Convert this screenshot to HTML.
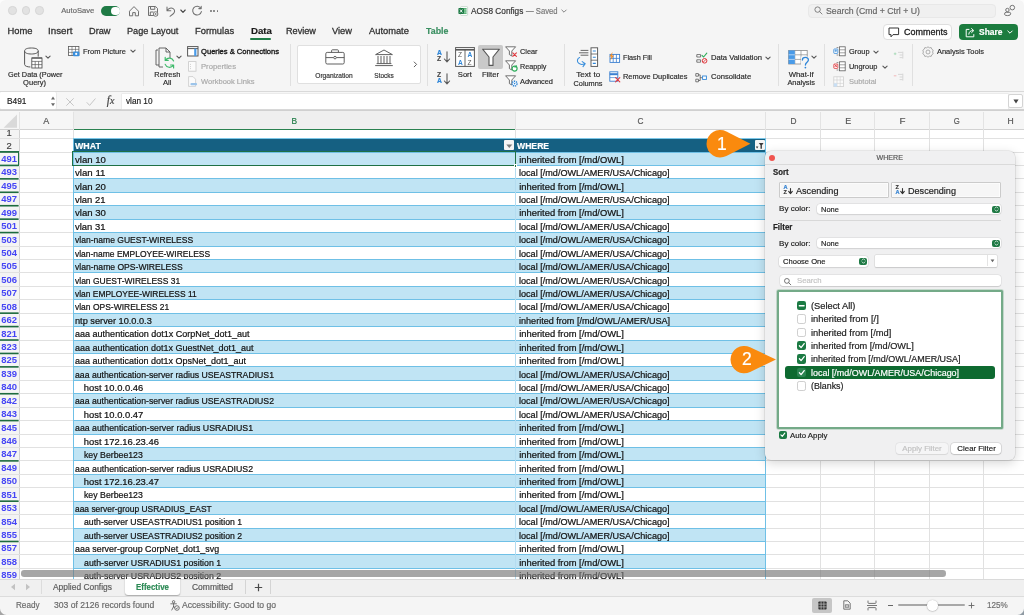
<!DOCTYPE html>
<html><head><meta charset="utf-8"><title>AOS8 Configs</title>
<style>
html,body{margin:0;padding:0;}
body{width:1024px;height:615px;overflow:hidden;position:relative;background:#f5f5f5;font-family:"Liberation Sans",sans-serif;}
.r{position:absolute;box-sizing:border-box;}
.t{position:absolute;white-space:nowrap;display:block;-webkit-text-stroke:0.18px;}
svg{overflow:visible;}
#w{position:absolute;left:0;top:0;width:1024px;height:615px;overflow:hidden;will-change:transform;-webkit-font-smoothing:antialiased;}
</style></head><body><div id="w">
<div class="r" style="left:0.00px;top:0.00px;width:1024.00px;height:91.00px;background:#f5f5f5;"></div>
<div class="r" style="left:8.30px;top:6.30px;width:8.40px;height:8.40px;background:#e2e2e2;border-radius:50%;border:0.6px solid #d6d6d6;"></div>
<div class="r" style="left:21.80px;top:6.30px;width:8.40px;height:8.40px;background:#e2e2e2;border-radius:50%;border:0.6px solid #d6d6d6;"></div>
<div class="r" style="left:35.30px;top:6.30px;width:8.40px;height:8.40px;background:#e2e2e2;border-radius:50%;border:0.6px solid #d6d6d6;"></div>
<span class="t" style="left:61.30px;top:6.34px;font-size:7.6px;line-height:9.12px;color:#6a6a6a;">AutoSave</span>
<div class="r" style="left:101.20px;top:5.90px;width:19.00px;height:9.80px;background:#1f7a45;border-radius:5px;"></div>
<div class="r" style="left:111.20px;top:6.60px;width:8.40px;height:8.40px;background:#fff;border-radius:50%;"></div>
<svg class="r" style="left:128.00px;top:4.70px;" width="12" height="12" viewBox="0 0 12 12"><path d="M1.5 6.2 L6 1.6 L10.5 6.2 V10.8 H7.3 V7.6 H4.7 V10.8 H1.5 Z" fill="none" stroke="#707070" stroke-width="1" stroke-linejoin="round"/></svg>
<svg class="r" style="left:146.50px;top:4.70px;" width="12" height="12" viewBox="0 0 12 12"><path d="M1.5 1.5 H8.6 L10.5 3.4 V10.5 H1.5 Z M3.5 1.5 V4.3 H7.8 V1.5 M3.3 10.5 V7 H6.5" fill="none" stroke="#707070" stroke-width="1" stroke-linejoin="round"/><circle cx="8.6" cy="9" r="2.3" fill="#f5f5f5" stroke="#707070" stroke-width="0.9"/><path d="M7.6 9 h2 M8.6 8 v2" stroke="#707070" stroke-width="0.7"/></svg>
<svg class="r" style="left:165.00px;top:4.70px;" width="12" height="12" viewBox="0 0 12 12"><path d="M2 2 V5.8 H5.8 M2.2 5.6 C3.5 3.2 6.2 2.3 8.2 3.6 C10.4 5 9.8 7.6 8 9 L5 11.3" fill="none" stroke="#707070" stroke-width="1.05" stroke-linecap="round" stroke-linejoin="round"/></svg>
<svg class="r" style="left:179.50px;top:8.70px;" width="6" height="5" viewBox="0 0 6 5"><path d="M0.8 1 L3 3.3 L5.2 1" fill="none" stroke="#444" stroke-width="1.1" stroke-linecap="round" stroke-linejoin="round"/></svg>
<svg class="r" style="left:190.50px;top:4.70px;" width="12" height="12" viewBox="0 0 12 12"><path d="M9.8 3.2 A4.4 4.4 0 1 0 10.4 6.6 M10.2 1.2 V3.6 H7.8" fill="none" stroke="#707070" stroke-width="1.05" stroke-linecap="round" stroke-linejoin="round"/></svg>
<div class="r" style="left:209.90px;top:10.00px;width:1.80px;height:1.80px;background:#707070;border-radius:50%;"></div>
<div class="r" style="left:213.30px;top:10.00px;width:1.80px;height:1.80px;background:#707070;border-radius:50%;"></div>
<div class="r" style="left:216.70px;top:10.00px;width:1.80px;height:1.80px;background:#707070;border-radius:50%;"></div>
<svg class="r" style="left:457.80px;top:6.00px;" width="10" height="10" viewBox="0 0 10 10"><rect x="2.6" y="0.6" width="7" height="8.8" rx="0.8" fill="#fff" stroke="#9fbfa8" stroke-width="0.5"/><rect x="5.6" y="2.2" width="3" height="1.4" fill="#35a35a"/><rect x="5.6" y="4.3" width="3" height="1.4" fill="#35a35a"/><rect x="5.6" y="6.4" width="3" height="1.4" fill="#35a35a"/><rect x="0.4" y="2" width="5.6" height="6" rx="0.8" fill="#1d7a45"/><path d="M2 3.5 L4.4 6.5 M4.4 3.5 L2 6.5" stroke="#fff" stroke-width="0.9"/></svg>
<span class="t" style="left:471.00px;top:6.06px;font-size:8.4px;line-height:10.08px;color:#333;transform:scaleX(0.9864);transform-origin:left center;">AOS8 Configs</span>
<span class="t" style="left:526.40px;top:6.06px;font-size:8.4px;line-height:10.08px;color:#777;transform:scaleX(0.9146);transform-origin:left center;">— Saved</span>
<svg class="r" style="left:561.00px;top:8.90px;" width="6" height="5" viewBox="0 0 6 5"><path d="M0.8 1 L3 3.2 L5.2 1" fill="none" stroke="#777" stroke-width="0.9" stroke-linecap="round" stroke-linejoin="round"/></svg>
<div class="r" style="left:808.00px;top:4.40px;width:187.50px;height:13.80px;background:#f0f0f0;border-radius:4px;border:0.6px solid #e8e8e8;"></div>
<svg class="r" style="left:813.50px;top:6.30px;" width="9" height="9" viewBox="0 0 9 9"><circle cx="3.6" cy="3.6" r="2.7" fill="none" stroke="#777" stroke-width="0.9"/><path d="M5.6 5.6 L8 8" stroke="#777" stroke-width="0.9" stroke-linecap="round"/></svg>
<span class="t" style="left:826.00px;top:5.64px;font-size:8.6px;line-height:10.32px;color:#666;transform:scaleX(1.0139);transform-origin:left center;">Search (Cmd + Ctrl + U)</span>
<svg class="r" style="left:1003.00px;top:4.00px;" width="14" height="13" viewBox="0 0 14 13"><circle cx="9.3" cy="3.6" r="2.3" fill="none" stroke="#666" stroke-width="0.9"/><circle cx="4.4" cy="6" r="1.7" fill="none" stroke="#666" stroke-width="0.9"/><path d="M1.5 10.2 Q1.5 8.3 3.2 8.3 H6.3 Q7.7 8.3 7.7 9.8 Q7.7 11.6 4.6 11.6 Q1.5 11.6 1.5 10.2 Z" fill="none" stroke="#666" stroke-width="0.9"/></svg>
<span class="t" style="left:7.50px;top:25.46px;font-size:9.4px;line-height:11.28px;color:#303030;-webkit-text-stroke:0.28px;">Home</span>
<span class="t" style="left:48.00px;top:25.46px;font-size:9.4px;line-height:11.28px;color:#303030;transform:scaleX(1.0422);transform-origin:left center;-webkit-text-stroke:0.28px;">Insert</span>
<span class="t" style="left:89.00px;top:25.46px;font-size:9.4px;line-height:11.28px;color:#303030;transform:scaleX(0.9802);transform-origin:left center;-webkit-text-stroke:0.28px;">Draw</span>
<span class="t" style="left:127.00px;top:25.46px;font-size:9.4px;line-height:11.28px;color:#303030;transform:scaleX(0.9757);transform-origin:left center;-webkit-text-stroke:0.28px;">Page Layout</span>
<span class="t" style="left:195.00px;top:25.46px;font-size:9.4px;line-height:11.28px;color:#303030;-webkit-text-stroke:0.28px;">Formulas</span>
<span class="t" style="left:286.00px;top:25.46px;font-size:9.4px;line-height:11.28px;color:#303030;transform:scaleX(0.9734);transform-origin:left center;-webkit-text-stroke:0.28px;">Review</span>
<span class="t" style="left:332.00px;top:25.46px;font-size:9.4px;line-height:11.28px;color:#303030;transform:scaleX(0.9899);transform-origin:left center;-webkit-text-stroke:0.28px;">View</span>
<span class="t" style="left:368.50px;top:25.46px;font-size:9.4px;line-height:11.28px;color:#303030;transform:scaleX(0.9942);transform-origin:left center;-webkit-text-stroke:0.28px;">Automate</span>
<span class="t" style="left:250.50px;top:25.36px;font-size:9.4px;line-height:11.28px;color:#1a1a1a;font-weight:bold;transform:scaleX(1.0308);transform-origin:left center;">Data</span>
<div class="r" style="left:250.40px;top:38.40px;width:21.00px;height:2.00px;background:#217d48;border-radius:1px;"></div>
<span class="t" style="left:425.50px;top:25.36px;font-size:9.4px;line-height:11.28px;color:#3a8f61;font-weight:bold;transform:scaleX(0.9434);transform-origin:left center;">Table</span>
<div class="r" style="left:883.00px;top:24.40px;width:68.50px;height:15.80px;background:#fff;border-radius:4px;border:0.6px solid #dedede;"></div>
<svg class="r" style="left:888.00px;top:27.00px;" width="12" height="11" viewBox="0 0 12 11"><path d="M1 1 H10.6 V7.6 H5 L3 9.8 V7.6 H1 Z" fill="none" stroke="#333" stroke-width="1" stroke-linejoin="round"/></svg>
<span class="t" style="left:903.50px;top:27.04px;font-size:9.1px;line-height:10.92px;color:#222;transform:scaleX(0.9888);transform-origin:left center;-webkit-text-stroke:0.3px;">Comments</span>
<div class="r" style="left:959.00px;top:24.40px;width:58.50px;height:15.80px;background:#1c7c3f;border-radius:4px;"></div>
<svg class="r" style="left:965.00px;top:26.80px;" width="11" height="11" viewBox="0 0 11 11"><path d="M4.4 2.4 H1.2 V9.8 H8.8 V7.2" fill="none" stroke="#fff" stroke-width="1" stroke-linejoin="round"/><path d="M3.8 7.2 C4 4.6 5.6 3.6 7.6 3.6 M6.6 1.6 L8.8 3.6 L6.6 5.6" fill="none" stroke="#fff" stroke-width="1" stroke-linejoin="round" stroke-linecap="round"/></svg>
<span class="t" style="left:979.00px;top:26.94px;font-size:9.1px;line-height:10.92px;color:#fff;font-weight:bold;transform:scaleX(0.9292);transform-origin:left center;">Share</span>
<svg class="r" style="left:1007.00px;top:30.40px;" width="6" height="5" viewBox="0 0 6 5"><path d="M0.8 1 L3 3.2 L5.2 1" fill="none" stroke="#fff" stroke-width="1" stroke-linecap="round" stroke-linejoin="round"/></svg>
<svg class="r" style="left:23.40px;top:46.60px;" width="20" height="26" viewBox="0 0 20 26"><path d="M1.6 4 V17.5 C1.6 19 4.4 20 7.4 20 M1.6 4 C1.6 1.8 4.6 1 8.4 1 C12.2 1 15.2 1.8 15.2 4 V9.6 M1.6 4 C1.6 6 4.6 7 8.4 7 C12.2 7 15.2 6 15.2 4" fill="none" stroke="#575757" stroke-width="1"/><rect x="8.8" y="11" width="10.2" height="10" fill="#fff" stroke="#575757" stroke-width="0.9"/><path d="M8.8 14.4 H19 M8.8 17.6 H19 M12.2 14.4 V21 M15.6 14.4 V21" stroke="#575757" stroke-width="0.7"/><path d="M8.8 11 H19" stroke="#575757" stroke-width="1.2"/></svg>
<svg class="r" style="left:44.60px;top:55.20px;" width="6" height="5" viewBox="0 0 6 5"><path d="M0.9 1.1 L3 3.2 L5.1 1.1" fill="none" stroke="#575757" stroke-width="1.1" stroke-linecap="round" stroke-linejoin="round"/></svg>
<span class="t" style="left:6.70px;top:69.74px;font-size:7.6px;line-height:9.12px;color:#2b2b2b;transform:scaleX(0.9630);transform-origin:center center;">Get Data (Power</span>
<span class="t" style="left:23.39px;top:78.24px;font-size:7.6px;line-height:9.12px;color:#2b2b2b;transform:scaleX(0.9903);transform-origin:center center;">Query)</span>
<svg class="r" style="left:68.00px;top:46.00px;" width="12" height="11" viewBox="0 0 12 11"><rect x="0.5" y="0.5" width="10.4" height="9" fill="#fff" stroke="#575757" stroke-width="0.8"/><path d="M0.5 3.4 H10.9 M0.5 6.4 H10.9 M4 0.5 V9.5 M7.5 0.5 V9.5" stroke="#575757" stroke-width="0.6"/><rect x="5" y="5.6" width="6.4" height="4.6" rx="0.8" fill="#3b8fdc"/><circle cx="8.2" cy="7.9" r="1.1" fill="#fff"/></svg>
<span class="t" style="left:83.00px;top:46.74px;font-size:7.6px;line-height:9.12px;color:#2b2b2b;transform:scaleX(0.9887);transform-origin:left center;">From Picture</span>
<svg class="r" style="left:130.00px;top:49.40px;" width="6" height="5" viewBox="0 0 6 5"><path d="M0.9 1.1 L3 3.2 L5.1 1.1" fill="none" stroke="#575757" stroke-width="1.1" stroke-linecap="round" stroke-linejoin="round"/></svg>
<div class="r" style="left:143.20px;top:44.00px;width:1.00px;height:41.50px;background:#e0e0e0;"></div>
<svg class="r" style="left:155.40px;top:47.00px;" width="22" height="25" viewBox="0 0 22 25"><path d="M3 3 H1 V18 H4" fill="none" stroke="#575757" stroke-width="0.9"/><path d="M4 1 H11 L15 5 V11 M4 1 V20 H8 M11 1 V5 H15" fill="none" stroke="#575757" stroke-width="0.9"/><path d="M18.6 14 A4.6 4.6 0 0 0 10.6 13 M10.2 10.4 V13.4 H13.2" fill="none" stroke="#3dba6a" stroke-width="1.2" stroke-linecap="round" stroke-linejoin="round"/><path d="M10.2 17.4 A4.6 4.6 0 0 0 18.2 18.4 M18.6 21 V18 H15.6" fill="none" stroke="#3dba6a" stroke-width="1.2" stroke-linecap="round" stroke-linejoin="round"/></svg>
<svg class="r" style="left:176.20px;top:54.60px;" width="6" height="5" viewBox="0 0 6 5"><path d="M0.9 1.1 L3 3.2 L5.1 1.1" fill="none" stroke="#575757" stroke-width="1.1" stroke-linecap="round" stroke-linejoin="round"/></svg>
<span class="t" style="left:153.70px;top:69.74px;font-size:7.6px;line-height:9.12px;color:#2b2b2b;transform:scaleX(0.9771);transform-origin:center center;">Refresh</span>
<span class="t" style="left:162.78px;top:78.14px;font-size:7.6px;line-height:9.12px;color:#2b2b2b;transform:scaleX(1.0063);transform-origin:center center;">All</span>
<svg class="r" style="left:186.50px;top:45.50px;" width="12" height="11" viewBox="0 0 12 11"><rect x="0.6" y="0.6" width="10.4" height="9.4" fill="#fff" stroke="#575757" stroke-width="1"/><path d="M0.6 2.6 H11" stroke="#575757" stroke-width="1"/><rect x="7.2" y="2.6" width="2.2" height="7.4" fill="#4a9be8"/></svg>
<span class="t" style="left:201.00px;top:46.74px;font-size:7.6px;line-height:9.12px;color:#1a1a1a;-webkit-text-stroke:0.35px;">Queries &amp; Connections</span>
<svg class="r" style="left:188.00px;top:60.80px;" width="9" height="11" viewBox="0 0 9 11"><rect x="0.6" y="0.6" width="7.4" height="9.6" fill="#fbfbfb" stroke="#c9c9c9" stroke-width="0.8"/><path d="M2.2 3.4 H3 M2.2 5.6 H3 M2.2 7.6 H3" stroke="#bbb" stroke-width="0.8"/></svg>
<span class="t" style="left:201.00px;top:61.74px;font-size:7.6px;line-height:9.12px;color:#a9a9a9;transform:scaleX(1.0105);transform-origin:left center;">Properties</span>
<svg class="r" style="left:188.00px;top:75.50px;" width="10" height="12" viewBox="0 0 10 12"><path d="M0.6 0.6 H5 L7.6 3.2 V10.4 H0.6 Z" fill="#fbfbfb" stroke="#c9c9c9" stroke-width="0.8"/><path d="M3.5 8.2 h4.5" stroke="#9cc4ea" stroke-width="2.2" stroke-linecap="round"/></svg>
<span class="t" style="left:201.00px;top:76.64px;font-size:7.6px;line-height:9.12px;color:#a9a9a9;transform:scaleX(0.9921);transform-origin:left center;">Workbook Links</span>
<div class="r" style="left:289.50px;top:44.00px;width:1.00px;height:41.50px;background:#e0e0e0;"></div>
<div class="r" style="left:297.00px;top:44.80px;width:123.50px;height:39.00px;background:#fff;border-radius:2px;border:0.6px solid #e0e0e0;"></div>
<svg class="r" style="left:324.50px;top:49.00px;" width="20" height="16" viewBox="0 0 20 16"><rect x="0.8" y="3.4" width="18.4" height="11.6" rx="1.4" fill="none" stroke="#575757" stroke-width="0.95"/><path d="M6.6 3.4 V1.6 Q6.6 0.8 7.4 0.8 H12.6 Q13.4 0.8 13.4 1.6 V3.4 M0.8 8.6 H8.6 M11.4 8.6 H19.2" fill="none" stroke="#575757" stroke-width="0.95"/><circle cx="10" cy="8.6" r="1.3" fill="none" stroke="#575757" stroke-width="0.9"/></svg>
<span class="t" style="left:315.01px;top:71.98px;font-size:6.7px;line-height:8.04px;color:#333;transform:scaleX(0.9872);transform-origin:center center;">Organization</span>
<svg class="r" style="left:373.60px;top:48.70px;" width="20" height="18" viewBox="0 0 20 18"><path d="M1.6 5.6 L10 1 L18.4 5.6 Z M1.2 16.6 H18.8 M2.6 14.6 H17.4 M4 7 V14.4 M7 7 V14.4 M10 7 V14.4 M13 7 V14.4 M16 7 V14.4" fill="none" stroke="#575757" stroke-width="0.95" stroke-linejoin="round"/></svg>
<span class="t" style="left:373.95px;top:71.98px;font-size:6.7px;line-height:8.04px;color:#333;transform:scaleX(0.9698);transform-origin:center center;">Stocks</span>
<svg class="r" style="left:412.50px;top:61.00px;" width="5" height="7" viewBox="0 0 5 7"><path d="M1.2 1 L3.6 3.4 L1.2 5.8" fill="none" stroke="#575757" stroke-width="0.95" stroke-linecap="round" stroke-linejoin="round"/></svg>
<div class="r" style="left:427.20px;top:44.00px;width:1.00px;height:41.50px;background:#e0e0e0;"></div>
<span class="t" style="left:437px;top:50.199999999999996px;font-size:6.8px;line-height:6.8px;color:#2f86d8;font-weight:bold;">A</span>
<span class="t" style="left:437px;top:56.199999999999996px;font-size:6.8px;line-height:6.8px;color:#4a4a4a;font-weight:bold;">Z</span>
<svg class="r" style="left:442.60px;top:50.80px;" width="8" height="13" viewBox="0 0 8 13"><path d="M4 0.8 V10.6 M1.4 8 L4 10.8 L6.6 8" fill="none" stroke="#575757" stroke-width="1.1" stroke-linecap="round" stroke-linejoin="round"/></svg>
<span class="t" style="left:437px;top:72.0px;font-size:6.8px;line-height:6.8px;color:#4a4a4a;font-weight:bold;">Z</span>
<span class="t" style="left:437px;top:78.0px;font-size:6.8px;line-height:6.8px;color:#2f86d8;font-weight:bold;">A</span>
<svg class="r" style="left:442.60px;top:72.60px;" width="8" height="13" viewBox="0 0 8 13"><path d="M4 0.8 V10.6 M1.4 8 L4 10.8 L6.6 8" fill="none" stroke="#575757" stroke-width="1.1" stroke-linecap="round" stroke-linejoin="round"/></svg>
<svg class="r" style="left:455.00px;top:46.50px;" width="20" height="20" viewBox="0 0 20 20"><rect x="0.6" y="0.6" width="18.8" height="18.8" fill="#fff" stroke="#575757" stroke-width="1"/><path d="M0.6 2.8 H19.4" stroke="#575757" stroke-width="1.6"/><path d="M10 2.8 V19.4" stroke="#575757" stroke-width="0.9"/><text x="3" y="10.4" font-size="6.6" font-family="Liberation Sans" fill="#575757">Z</text><text x="3" y="17.6" font-size="6.6" font-family="Liberation Sans" fill="#2f86d8" font-weight="bold">A</text><text x="12.4" y="10.4" font-size="6.6" font-family="Liberation Sans" fill="#2f86d8" font-weight="bold">A</text><text x="12.4" y="17.6" font-size="6.6" font-family="Liberation Sans" fill="#575757">Z</text></svg>
<span class="t" style="left:457.83px;top:69.74px;font-size:7.6px;line-height:9.12px;color:#2b2b2b;">Sort</span>
<div class="r" style="left:478.00px;top:45.00px;width:24.50px;height:23.50px;background:#c9c9c9;border-radius:2px;"></div>
<svg class="r" style="left:480.50px;top:47.50px;" width="20" height="19" viewBox="0 0 20 19"><path d="M1.6 1.2 H18.4 L12 9 V17.4 H8 V9 Z" fill="#fff" stroke="#575757" stroke-width="1.1" stroke-linejoin="round"/></svg>
<span class="t" style="left:481.56px;top:69.74px;font-size:7.6px;line-height:9.12px;color:#2b2b2b;transform:scaleX(1.0067);transform-origin:center center;">Filter</span>
<svg class="r" style="left:505.20px;top:45.60px;" width="13" height="12" viewBox="0 0 13 12"><path d="M0.6 0.8 h10 l-3.8 4.2 v5 l-2.4 -1.4 v-3.6 z" fill="#fff" stroke="#575757" stroke-width="0.85" stroke-linejoin="round"/><path d="M7.8 6.8 L11.4 10.4 M11.4 6.8 L7.8 10.4" stroke="#e0383e" stroke-width="1.1" stroke-linecap="round"/></svg>
<span class="t" style="left:520.30px;top:46.74px;font-size:7.6px;line-height:9.12px;color:#2b2b2b;transform:scaleX(0.9636);transform-origin:left center;">Clear</span>
<svg class="r" style="left:505.20px;top:60.40px;" width="13" height="12" viewBox="0 0 13 12"><path d="M0.6 0.8 h10 l-3.8 4.2 v5 l-2.4 -1.4 v-3.6 z" fill="#fff" stroke="#575757" stroke-width="0.85" stroke-linejoin="round"/><circle cx="9.6" cy="8.6" r="2.5" fill="#fff" stroke="#2eae5b" stroke-width="1.2"/><path d="M11.2 5 V7 H9.2" fill="none" stroke="#2eae5b" stroke-width="0.9"/></svg>
<span class="t" style="left:520.30px;top:61.64px;font-size:7.6px;line-height:9.12px;color:#2b2b2b;transform:scaleX(0.9504);transform-origin:left center;">Reapply</span>
<svg class="r" style="left:505.20px;top:75.20px;" width="13" height="12" viewBox="0 0 13 12"><path d="M0.6 0.8 h10 l-3.8 4.2 v5 l-2.4 -1.4 v-3.6 z" fill="#fff" stroke="#575757" stroke-width="0.85" stroke-linejoin="round"/><circle cx="9.6" cy="8.6" r="2.4" fill="#fff" stroke="#2f86d8" stroke-width="1.5" stroke-dasharray="1.2 0.7"/><circle cx="9.6" cy="8.6" r="0.8" fill="#2f86d8"/></svg>
<span class="t" style="left:520.30px;top:76.64px;font-size:7.6px;line-height:9.12px;color:#2b2b2b;transform:scaleX(0.9763);transform-origin:left center;">Advanced</span>
<div class="r" style="left:563.70px;top:44.00px;width:1.00px;height:41.50px;background:#e0e0e0;"></div>
<svg class="r" style="left:576.00px;top:47.00px;" width="24" height="22" viewBox="0 0 24 22"><path d="M4.6 3.4 H12.4 M3 5.8 H12.4 M4.6 8.2 H12.4" stroke="#575757" stroke-width="0.9"/><rect x="15" y="0.8" width="6.6" height="18.6" fill="#fff" stroke="#575757" stroke-width="0.95"/><path d="M15 7 H21.6 M15 13.2 H21.6" stroke="#575757" stroke-width="0.8"/><path d="M16.8 4 h3 M16.8 10.2 h3 M16.8 16.4 h3" stroke="#2f86d8" stroke-width="1.1"/><path d="M3.6 10.6 C1 11.6 0.8 14.6 2.6 16.2 C4 17.4 6.6 17.8 8.6 16.6 M7 19.6 L9.2 16.6 L6.2 14.6" fill="none" stroke="#3b8fdc" stroke-width="1.1" stroke-linecap="round" stroke-linejoin="round"/></svg>
<span class="t" style="left:576.81px;top:69.74px;font-size:7.6px;line-height:9.12px;color:#2b2b2b;transform:scaleX(1.0721);transform-origin:center center;">Text to</span>
<span class="t" style="left:573.01px;top:78.74px;font-size:7.6px;line-height:9.12px;color:#2b2b2b;transform:scaleX(0.9671);transform-origin:center center;">Columns</span>
<svg class="r" style="left:607.50px;top:51.70px;" width="13" height="12" viewBox="0 0 13 12"><rect x="2" y="2.4" width="9.6" height="8" fill="#fff" stroke="#3b7fd0" stroke-width="0.9"/><path d="M2 6.4 H11.6 M5.2 2.4 V10.4 M8.4 2.4 V10.4" stroke="#3b7fd0" stroke-width="0.8"/><path d="M4.6 0 L1.4 4.6 H3.4 L2.4 8.4 L6 3.4 H3.8 Z" fill="#f08a24"/></svg>
<span class="t" style="left:623.00px;top:52.94px;font-size:7.6px;line-height:9.12px;color:#2b2b2b;transform:scaleX(0.9539);transform-origin:left center;">Flash Fill</span>
<svg class="r" style="left:608.60px;top:70.80px;" width="13" height="12" viewBox="0 0 13 12"><rect x="0.8" y="0.8" width="8" height="9.4" fill="#fff" stroke="#3b7fd0" stroke-width="0.9"/><path d="M0.8 3.2 H8.8" stroke="#3b7fd0" stroke-width="2"/><path d="M0.8 6.6 H8.8" stroke="#3b7fd0" stroke-width="0.7"/><path d="M6.6 6.6 L10.8 10.8 M10.8 6.6 L6.6 10.8" stroke="#e0383e" stroke-width="1.1" stroke-linecap="round"/></svg>
<span class="t" style="left:623.00px;top:72.44px;font-size:7.6px;line-height:9.12px;color:#2b2b2b;transform:scaleX(0.9789);transform-origin:left center;">Remove Duplicates</span>
<svg class="r" style="left:695.60px;top:51.70px;" width="13" height="12" viewBox="0 0 13 12"><path d="M0.8 2.6 H4.6 V5 H0.8 Z M0.8 7.8 H4.6 V10.2 H0.8 Z" fill="#fff" stroke="#575757" stroke-width="0.8"/><path d="M6 3.4 L7.6 5 L10.8 1.2" fill="none" stroke="#2eae5b" stroke-width="1.1" stroke-linecap="round" stroke-linejoin="round"/><circle cx="8.6" cy="8.8" r="2.3" fill="none" stroke="#e0383e" stroke-width="1"/><path d="M7 10.4 L10.2 7.2" stroke="#e0383e" stroke-width="0.9"/></svg>
<span class="t" style="left:711.00px;top:53.14px;font-size:7.6px;line-height:9.12px;color:#2b2b2b;">Data Validation</span>
<svg class="r" style="left:764.60px;top:55.80px;" width="6" height="5" viewBox="0 0 6 5"><path d="M0.9 1.1 L3 3.2 L5.1 1.1" fill="none" stroke="#575757" stroke-width="1.1" stroke-linecap="round" stroke-linejoin="round"/></svg>
<svg class="r" style="left:695.00px;top:71.50px;" width="13" height="12" viewBox="0 0 13 12"><path d="M0.8 1.6 H3.4 V4.2 H0.8 Z M0.8 7.2 H3.4 V9.8 H0.8 Z" fill="#fff" stroke="#575757" stroke-width="0.8"/><path d="M3.4 2.9 H5.2 V8.5 H3.4 M5.2 5.7 H7.6" fill="none" stroke="#575757" stroke-width="0.8"/><rect x="7.6" y="4" width="3.8" height="3.4" fill="#fff" stroke="#2f86d8" stroke-width="0.9"/></svg>
<span class="t" style="left:711.00px;top:72.44px;font-size:7.6px;line-height:9.12px;color:#2b2b2b;">Consolidate</span>
<div class="r" style="left:777.70px;top:44.00px;width:1.00px;height:41.50px;background:#e0e0e0;"></div>
<svg class="r" style="left:788.00px;top:49.00px;" width="20" height="20" viewBox="0 0 20 20"><rect x="0.6" y="1.4" width="18.6" height="13.6" fill="#fff" stroke="#8a8a8a" stroke-width="0.8"/><path d="M0.6 5.8 H19.2 M0.6 10.4 H19.2 M6.8 1.4 V15 M13 1.4 V15" stroke="#8a8a8a" stroke-width="0.7"/><rect x="0.6" y="1.4" width="6.2" height="13.6" fill="#4a9be8"/><rect x="6.8" y="1.4" width="0" height="0" fill="none"/><rect x="0.6" y="0.6" width="17.4" height="4.4" fill="#3b8fdc" opacity="0.0"/><path d="M0.6 5.8 H6.8 M0.6 10.4 H6.8" stroke="#dbeafa" stroke-width="0.7"/><rect x="13" y="7.6" width="9" height="13" fill="#f5f5f5"/><path d="M14.4 11 C14.4 7.6 20.4 7.4 20.4 11 C20.4 13.2 17.4 13.2 17.4 16" fill="none" stroke="#2f86d8" stroke-width="1.3" stroke-linecap="round"/><circle cx="17.4" cy="18.6" r="0.9" fill="#2f86d8"/></svg>
<svg class="r" style="left:810.80px;top:54.60px;" width="6" height="5" viewBox="0 0 6 5"><path d="M0.9 1.1 L3 3.2 L5.1 1.1" fill="none" stroke="#575757" stroke-width="1.1" stroke-linecap="round" stroke-linejoin="round"/></svg>
<span class="t" style="left:788.75px;top:70.04px;font-size:7.6px;line-height:9.12px;color:#2b2b2b;transform:scaleX(1.0208);transform-origin:center center;">What-If</span>
<span class="t" style="left:786.85px;top:78.14px;font-size:7.6px;line-height:9.12px;color:#2b2b2b;transform:scaleX(0.9718);transform-origin:center center;">Analysis</span>
<div class="r" style="left:824.20px;top:44.00px;width:1.00px;height:41.50px;background:#e0e0e0;"></div>
<svg class="r" style="left:832.50px;top:46.20px;" width="14" height="11" viewBox="0 0 14 11"><rect x="6.4" y="0.8" width="5.8" height="9" fill="#fff" stroke="#5f5f5f" stroke-width="0.8"/><path d="M6.4 3.8 H12.2 M6.4 6.8 H12.2" stroke="#5f5f5f" stroke-width="0.6"/><path d="M5.4 1.6 H3.6 M5.4 9 H3.6" stroke="#5f5f5f" stroke-width="0.7"/><rect x="0.8" y="3" width="4" height="4.4" rx="0.6" fill="#fff" stroke="#2f86d8" stroke-width="0.8"/><path d="M1.6 4.8 H4 M2.8 3.6 V6" stroke="#2f86d8" stroke-width="0.7"/></svg>
<span class="t" style="left:849.00px;top:47.04px;font-size:7.6px;line-height:9.12px;color:#2b2b2b;transform:scaleX(0.9706);transform-origin:left center;">Group</span>
<svg class="r" style="left:872.50px;top:49.60px;" width="6" height="5" viewBox="0 0 6 5"><path d="M0.9 1.1 L3 3.2 L5.1 1.1" fill="none" stroke="#575757" stroke-width="1.1" stroke-linecap="round" stroke-linejoin="round"/></svg>
<svg class="r" style="left:832.50px;top:61.00px;" width="14" height="11" viewBox="0 0 14 11"><rect x="6.4" y="0.8" width="5.8" height="9" fill="#fff" stroke="#5f5f5f" stroke-width="0.8"/><path d="M6.4 3.8 H12.2 M6.4 6.8 H12.2" stroke="#5f5f5f" stroke-width="0.6"/><path d="M5.4 1.6 H3.6 M5.4 9 H3.6" stroke="#5f5f5f" stroke-width="0.7"/><rect x="0.8" y="3" width="4" height="4.4" rx="0.6" fill="#fff" stroke="#e0383e" stroke-width="0.8"/><path d="M1.4 3.4 L4.2 6.2 M4.2 3.4 L1.4 6.2" stroke="#e0383e" stroke-width="0.8"/></svg>
<span class="t" style="left:849.00px;top:61.94px;font-size:7.6px;line-height:9.12px;color:#2b2b2b;transform:scaleX(0.9777);transform-origin:left center;">Ungroup</span>
<svg class="r" style="left:881.50px;top:64.60px;" width="6" height="5" viewBox="0 0 6 5"><path d="M0.9 1.1 L3 3.2 L5.1 1.1" fill="none" stroke="#575757" stroke-width="1.1" stroke-linecap="round" stroke-linejoin="round"/></svg>
<svg class="r" style="left:833.00px;top:75.60px;" width="14" height="12" viewBox="0 0 14 12"><rect x="0.8" y="0.8" width="9.6" height="9.8" fill="#fbfbfb" stroke="#cfcfcf" stroke-width="0.8"/><path d="M0.8 4 H10.4 M0.8 7.4 H10.4 M4 0.8 V10.6 M7.2 0.8 V10.6" stroke="#cfcfcf" stroke-width="0.6"/><rect x="0.8" y="7.4" width="3.2" height="3.2" fill="#c8dff5"/></svg>
<span class="t" style="left:849.00px;top:76.94px;font-size:7.6px;line-height:9.12px;color:#a9a9a9;transform:scaleX(0.9862);transform-origin:left center;">Subtotal</span>
<svg class="r" style="left:893.00px;top:50.60px;" width="12" height="9" viewBox="0 0 12 9"><path d="M5 1.4 H9.6 M6.6 4 H9.6 M6.6 6.6 H9.6 M9.8 0.6 V7.6" stroke="#cfcfcf" stroke-width="0.8" fill="none"/><path d="M0.8 2.8 H3.4 M2.1 1.5 V4.1" stroke="#9fd7b3" stroke-width="0.8"/></svg>
<svg class="r" style="left:893.00px;top:73.20px;" width="12" height="9" viewBox="0 0 12 9"><path d="M5 1.4 H9.6 M6.6 4 H9.6 M6.6 6.6 H9.6 M9.8 0.6 V7.6" stroke="#cfcfcf" stroke-width="0.8" fill="none"/><path d="M0.8 2.8 H3.4" stroke="#f0a7a9" stroke-width="0.8"/></svg>
<div class="r" style="left:912.20px;top:44.00px;width:1.00px;height:41.50px;background:#e0e0e0;"></div>
<svg class="r" style="left:921.50px;top:45.50px;" width="12" height="12" viewBox="0 0 12 12"><path d="M6 0.8 L7.4 1.8 L9.2 1.6 L9.8 3.2 L11.2 4.2 L10.6 6 L11.2 7.8 L9.8 8.8 L9.2 10.4 L7.4 10.2 L6 11.2 L4.6 10.2 L2.8 10.4 L2.2 8.8 L0.8 7.8 L1.4 6 L0.8 4.2 L2.2 3.2 L2.8 1.6 L4.6 1.8 Z" fill="none" stroke="#9a9a9a" stroke-width="0.8" stroke-linejoin="round"/><circle cx="6" cy="6" r="2" fill="none" stroke="#9a9a9a" stroke-width="0.8"/></svg>
<span class="t" style="left:937.00px;top:46.74px;font-size:7.6px;line-height:9.12px;color:#2b2b2b;transform:scaleX(0.9789);transform-origin:left center;">Analysis Tools</span>
<div class="r" style="left:0.00px;top:90.80px;width:1024.00px;height:0.90px;background:#d9d9d9;"></div>
<div class="r" style="left:0.00px;top:91.70px;width:1024.00px;height:17.80px;background:#f6f6f6;"></div>
<div class="r" style="left:0.00px;top:109.20px;width:1024.00px;height:2.00px;background:#d0d0d0;"></div>
<div class="r" style="left:0.00px;top:92.40px;width:56.40px;height:16.20px;background:#fff;border-radius:1px;box-shadow:0 0 0 0.5px #dcdcdc;"></div>
<span class="t" style="left:6.60px;top:96.16px;font-size:8.4px;line-height:10.08px;color:#222;transform:scaleX(0.9941);transform-origin:left center;">B491</span>
<svg class="r" style="left:49.60px;top:94.60px;" width="6" height="13" viewBox="0 0 6 13"><path d="M1 4.6 L3 1.6 L5 4.6 Z M1 8.2 L3 11.2 L5 8.2 Z" fill="#6a6a6a"/></svg>
<svg class="r" style="left:66.40px;top:97.80px;" width="8" height="8" viewBox="0 0 8 8"><path d="M0.6 0.6 L7.4 7.4 M7.4 0.6 L0.6 7.4" stroke="#c6c6c6" stroke-width="1" stroke-linecap="round"/></svg>
<svg class="r" style="left:85.80px;top:97.60px;" width="10" height="8" viewBox="0 0 10 8"><path d="M1 4.6 L3.6 7.4 L9.2 0.8" fill="none" stroke="#c6c6c6" stroke-width="1" stroke-linecap="round" stroke-linejoin="round"/></svg>
<span class="t" style="left:106.8px;top:94.4px;font-size:11.5px;line-height:13px;color:#444;font-family:'Liberation Serif',serif;font-style:italic;">f<span style="font-size:10px;">x</span></span>
<div class="r" style="left:121.60px;top:94.40px;width:886.00px;height:14.20px;background:#fff;box-shadow:0 0 0 0.5px #e0e0e0;"></div>
<span class="t" style="left:126.40px;top:96.16px;font-size:8.4px;line-height:10.08px;color:#222;transform:scaleX(0.9821);transform-origin:left center;">vlan 10</span>
<div class="r" style="left:1008.40px;top:94.20px;width:14.80px;height:13.80px;background:#fff;border-radius:2px;border:0.6px solid #d4d4d4;"></div>
<svg class="r" style="left:1013.40px;top:99.00px;" width="6" height="5" viewBox="0 0 6 5"><path d="M0.4 0.6 H5.6 L3 4.4 Z" fill="#444"/></svg>
<div class="r" style="left:0.00px;top:111.20px;width:1024.00px;height:467.80px;background:#fff;"></div>
<div class="r" style="left:0.00px;top:111.20px;width:1024.00px;height:18.40px;background:#f6f6f6;border-bottom:1px solid #d2d2d2;"></div>
<div class="r" style="left:73.00px;top:111.20px;width:442.50px;height:18.40px;background:#efefef;"></div>
<div class="r" style="left:73.00px;top:128.60px;width:442.50px;height:1.20px;background:#2a8150;"></div>
<div class="r" style="left:18.50px;top:112.20px;width:1.00px;height:17.40px;background:#e3e3e3;"></div>
<div class="r" style="left:72.70px;top:112.20px;width:1.00px;height:17.40px;background:#e3e3e3;"></div>
<div class="r" style="left:515.00px;top:112.20px;width:1.00px;height:17.40px;background:#e3e3e3;"></div>
<div class="r" style="left:765.00px;top:112.20px;width:1.00px;height:17.40px;background:#e3e3e3;"></div>
<div class="r" style="left:819.60px;top:112.20px;width:1.00px;height:17.40px;background:#e3e3e3;"></div>
<div class="r" style="left:874.10px;top:112.20px;width:1.00px;height:17.40px;background:#e3e3e3;"></div>
<div class="r" style="left:928.60px;top:112.20px;width:1.00px;height:17.40px;background:#e3e3e3;"></div>
<div class="r" style="left:983.10px;top:112.20px;width:1.00px;height:17.40px;background:#e3e3e3;"></div>
<span class="t" style="left:42.73px;top:115.22px;font-size:9.8px;line-height:11.76px;color:#555;transform:scaleX(0.9179);transform-origin:center center;">A</span>
<span class="t" style="left:637.46px;top:115.22px;font-size:9.8px;line-height:11.76px;color:#555;transform:scaleX(0.8478);transform-origin:center center;">C</span>
<span class="t" style="left:790.16px;top:115.22px;font-size:9.8px;line-height:11.76px;color:#555;transform:scaleX(0.8478);transform-origin:center center;">D</span>
<span class="t" style="left:844.93px;top:115.22px;font-size:9.8px;line-height:11.76px;color:#555;transform:scaleX(0.9179);transform-origin:center center;">E</span>
<span class="t" style="left:899.61px;top:115.22px;font-size:9.8px;line-height:11.76px;color:#555;">F</span>
<span class="t" style="left:953.39px;top:115.22px;font-size:9.8px;line-height:11.76px;color:#555;transform:scaleX(0.7871);transform-origin:center center;">G</span>
<span class="t" style="left:1006.86px;top:115.22px;font-size:9.8px;line-height:11.76px;color:#555;transform:scaleX(0.8760);transform-origin:center center;">H</span>
<span class="t" style="left:291.23px;top:115.22px;font-size:9.8px;line-height:11.76px;color:#1e7b45;transform:scaleX(0.8567);transform-origin:center center;">B</span>
<svg class="r" style="left:3.00px;top:114.20px;" width="15" height="15" viewBox="0 0 15 15"><path d="M14 0.6 V13.8 H0.6 Z" fill="#d9d9d9"/></svg>
<div class="r" style="left:0.00px;top:129.60px;width:18.50px;height:449.40px;background:#f4f4f4;"></div>
<div class="r" style="left:18.50px;top:129.60px;width:1.00px;height:449.40px;background:#d2d2d2;"></div>
<div class="r" style="left:0.00px;top:137.90px;width:1024.00px;height:1.00px;background:#e1e1e1;"></div>
<div class="r" style="left:0.00px;top:151.50px;width:1024.00px;height:1.00px;background:#e1e1e1;"></div>
<div class="r" style="left:0.00px;top:164.93px;width:1024.00px;height:1.00px;background:#e1e1e1;"></div>
<div class="r" style="left:0.00px;top:178.36px;width:1024.00px;height:1.00px;background:#e1e1e1;"></div>
<div class="r" style="left:0.00px;top:191.79px;width:1024.00px;height:1.00px;background:#e1e1e1;"></div>
<div class="r" style="left:0.00px;top:205.22px;width:1024.00px;height:1.00px;background:#e1e1e1;"></div>
<div class="r" style="left:0.00px;top:218.65px;width:1024.00px;height:1.00px;background:#e1e1e1;"></div>
<div class="r" style="left:0.00px;top:232.08px;width:1024.00px;height:1.00px;background:#e1e1e1;"></div>
<div class="r" style="left:0.00px;top:245.51px;width:1024.00px;height:1.00px;background:#e1e1e1;"></div>
<div class="r" style="left:0.00px;top:258.94px;width:1024.00px;height:1.00px;background:#e1e1e1;"></div>
<div class="r" style="left:0.00px;top:272.37px;width:1024.00px;height:1.00px;background:#e1e1e1;"></div>
<div class="r" style="left:0.00px;top:285.80px;width:1024.00px;height:1.00px;background:#e1e1e1;"></div>
<div class="r" style="left:0.00px;top:299.23px;width:1024.00px;height:1.00px;background:#e1e1e1;"></div>
<div class="r" style="left:0.00px;top:312.66px;width:1024.00px;height:1.00px;background:#e1e1e1;"></div>
<div class="r" style="left:0.00px;top:326.09px;width:1024.00px;height:1.00px;background:#e1e1e1;"></div>
<div class="r" style="left:0.00px;top:339.52px;width:1024.00px;height:1.00px;background:#e1e1e1;"></div>
<div class="r" style="left:0.00px;top:352.95px;width:1024.00px;height:1.00px;background:#e1e1e1;"></div>
<div class="r" style="left:0.00px;top:366.38px;width:1024.00px;height:1.00px;background:#e1e1e1;"></div>
<div class="r" style="left:0.00px;top:379.81px;width:1024.00px;height:1.00px;background:#e1e1e1;"></div>
<div class="r" style="left:0.00px;top:393.24px;width:1024.00px;height:1.00px;background:#e1e1e1;"></div>
<div class="r" style="left:0.00px;top:406.67px;width:1024.00px;height:1.00px;background:#e1e1e1;"></div>
<div class="r" style="left:0.00px;top:420.10px;width:1024.00px;height:1.00px;background:#e1e1e1;"></div>
<div class="r" style="left:0.00px;top:433.53px;width:1024.00px;height:1.00px;background:#e1e1e1;"></div>
<div class="r" style="left:0.00px;top:446.96px;width:1024.00px;height:1.00px;background:#e1e1e1;"></div>
<div class="r" style="left:0.00px;top:460.39px;width:1024.00px;height:1.00px;background:#e1e1e1;"></div>
<div class="r" style="left:0.00px;top:473.82px;width:1024.00px;height:1.00px;background:#e1e1e1;"></div>
<div class="r" style="left:0.00px;top:487.25px;width:1024.00px;height:1.00px;background:#e1e1e1;"></div>
<div class="r" style="left:0.00px;top:500.68px;width:1024.00px;height:1.00px;background:#e1e1e1;"></div>
<div class="r" style="left:0.00px;top:514.11px;width:1024.00px;height:1.00px;background:#e1e1e1;"></div>
<div class="r" style="left:0.00px;top:527.54px;width:1024.00px;height:1.00px;background:#e1e1e1;"></div>
<div class="r" style="left:0.00px;top:540.97px;width:1024.00px;height:1.00px;background:#e1e1e1;"></div>
<div class="r" style="left:0.00px;top:554.40px;width:1024.00px;height:1.00px;background:#e1e1e1;"></div>
<div class="r" style="left:0.00px;top:567.83px;width:1024.00px;height:1.00px;background:#e1e1e1;"></div>
<div class="r" style="left:72.70px;top:129.60px;width:1.00px;height:449.40px;background:#e1e1e1;"></div>
<div class="r" style="left:515.00px;top:129.60px;width:1.00px;height:449.40px;background:#e1e1e1;"></div>
<div class="r" style="left:765.00px;top:129.60px;width:1.00px;height:449.40px;background:#e1e1e1;"></div>
<div class="r" style="left:819.60px;top:129.60px;width:1.00px;height:449.40px;background:#e1e1e1;"></div>
<div class="r" style="left:874.10px;top:129.60px;width:1.00px;height:449.40px;background:#e1e1e1;"></div>
<div class="r" style="left:928.60px;top:129.60px;width:1.00px;height:449.40px;background:#e1e1e1;"></div>
<div class="r" style="left:983.10px;top:129.60px;width:1.00px;height:449.40px;background:#e1e1e1;"></div>
<div class="r" style="left:73.00px;top:138.00px;width:693.00px;height:1.00px;background:#7cc7e8;"></div>
<div class="r" style="left:73.00px;top:139.00px;width:693.00px;height:13.00px;background:#156082;"></div>
<span class="t" style="left:75.20px;top:140.16px;font-size:9.4px;line-height:11.28px;color:#fff;font-weight:bold;transform:scaleX(0.9457);transform-origin:left center;">WHAT</span>
<span class="t" style="left:516.90px;top:140.16px;font-size:9.4px;line-height:11.28px;color:#fff;font-weight:bold;transform:scaleX(0.9203);transform-origin:left center;">WHERE</span>
<div class="r" style="left:504.30px;top:140.20px;width:10.10px;height:10.10px;background:#f5f5f5;border-radius:1px;"></div>
<svg class="r" style="left:506.20px;top:143.60px;" width="7" height="5" viewBox="0 0 7 5"><path d="M0.3 0.6 H6.3 L3.3 4 Z" fill="#7d7d7d"/></svg>
<div class="r" style="left:754.60px;top:140.20px;width:10.10px;height:10.10px;background:#f5f5f5;border-radius:1px;"></div>
<svg class="r" style="left:755.20px;top:141.60px;" width="9" height="8" viewBox="0 0 9 8"><path d="M3.8 1 H8.6 L6.9 3.2 V6.8 H5.5 V3.2 Z" fill="#3a3a3a"/><path d="M0.8 4.6 H3.4 L2.1 6.4 Z" fill="#3a3a3a"/></svg>
<div class="r" style="left:73.00px;top:152.00px;width:693.00px;height:13.43px;background:#c0e4f4;"></div>
<span class="t" style="left:75.20px;top:153.68px;font-size:9.4px;line-height:11.28px;color:#111;transform:scaleX(1.0228);transform-origin:left center;-webkit-text-stroke:0.22px #111;">vlan 10</span>
<span class="t" style="left:519.20px;top:153.68px;font-size:9.4px;line-height:11.28px;color:#111;-webkit-text-stroke:0.22px #111;">inherited from [/md/OWL]</span>
<span class="t" style="left:75.20px;top:167.11px;font-size:9.4px;line-height:11.28px;color:#111;transform:scaleX(1.0300);transform-origin:left center;-webkit-text-stroke:0.22px #111;">vlan 11</span>
<span class="t" style="left:519.20px;top:167.11px;font-size:9.4px;line-height:11.28px;color:#111;transform:scaleX(0.9700);transform-origin:left center;-webkit-text-stroke:0.22px #111;">local [/md/OWL/AMER/USA/Chicago]</span>
<div class="r" style="left:73.00px;top:178.86px;width:693.00px;height:13.43px;background:#c0e4f4;"></div>
<span class="t" style="left:75.20px;top:180.54px;font-size:9.4px;line-height:11.28px;color:#111;transform:scaleX(1.0228);transform-origin:left center;-webkit-text-stroke:0.22px #111;">vlan 20</span>
<span class="t" style="left:519.20px;top:180.54px;font-size:9.4px;line-height:11.28px;color:#111;-webkit-text-stroke:0.22px #111;">inherited from [/md/OWL]</span>
<span class="t" style="left:75.20px;top:193.97px;font-size:9.4px;line-height:11.28px;color:#111;transform:scaleX(1.0063);transform-origin:left center;-webkit-text-stroke:0.22px #111;">vlan 21</span>
<span class="t" style="left:519.20px;top:193.97px;font-size:9.4px;line-height:11.28px;color:#111;transform:scaleX(0.9700);transform-origin:left center;-webkit-text-stroke:0.22px #111;">local [/md/OWL/AMER/USA/Chicago]</span>
<div class="r" style="left:73.00px;top:205.72px;width:693.00px;height:13.43px;background:#c0e4f4;"></div>
<span class="t" style="left:75.20px;top:207.40px;font-size:9.4px;line-height:11.28px;color:#111;transform:scaleX(1.0228);transform-origin:left center;-webkit-text-stroke:0.22px #111;">vlan 30</span>
<span class="t" style="left:519.20px;top:207.40px;font-size:9.4px;line-height:11.28px;color:#111;-webkit-text-stroke:0.22px #111;">inherited from [/md/OWL]</span>
<span class="t" style="left:75.20px;top:220.83px;font-size:9.4px;line-height:11.28px;color:#111;transform:scaleX(1.0063);transform-origin:left center;-webkit-text-stroke:0.22px #111;">vlan 31</span>
<span class="t" style="left:519.20px;top:220.83px;font-size:9.4px;line-height:11.28px;color:#111;transform:scaleX(0.9700);transform-origin:left center;-webkit-text-stroke:0.22px #111;">local [/md/OWL/AMER/USA/Chicago]</span>
<div class="r" style="left:73.00px;top:232.58px;width:693.00px;height:13.43px;background:#c0e4f4;"></div>
<span class="t" style="left:75.20px;top:234.25px;font-size:9.4px;line-height:11.28px;color:#111;transform:scaleX(0.9111);transform-origin:left center;-webkit-text-stroke:0.22px #111;">vlan-name GUEST-WIRELESS</span>
<span class="t" style="left:519.20px;top:234.25px;font-size:9.4px;line-height:11.28px;color:#111;transform:scaleX(0.9700);transform-origin:left center;-webkit-text-stroke:0.22px #111;">local [/md/OWL/AMER/USA/Chicago]</span>
<span class="t" style="left:75.20px;top:247.69px;font-size:9.4px;line-height:11.28px;color:#111;transform:scaleX(0.9038);transform-origin:left center;-webkit-text-stroke:0.22px #111;">vlan-name EMPLOYEE-WIRELESS</span>
<span class="t" style="left:519.20px;top:247.69px;font-size:9.4px;line-height:11.28px;color:#111;transform:scaleX(0.9700);transform-origin:left center;-webkit-text-stroke:0.22px #111;">local [/md/OWL/AMER/USA/Chicago]</span>
<div class="r" style="left:73.00px;top:259.44px;width:693.00px;height:13.43px;background:#c0e4f4;"></div>
<span class="t" style="left:75.20px;top:261.12px;font-size:9.4px;line-height:11.28px;color:#111;transform:scaleX(0.9148);transform-origin:left center;-webkit-text-stroke:0.22px #111;">vlan-name OPS-WIRELESS</span>
<span class="t" style="left:519.20px;top:261.12px;font-size:9.4px;line-height:11.28px;color:#111;transform:scaleX(0.9700);transform-origin:left center;-webkit-text-stroke:0.22px #111;">local [/md/OWL/AMER/USA/Chicago]</span>
<span class="t" style="left:75.20px;top:274.55px;font-size:9.4px;line-height:11.28px;color:#111;transform:scaleX(0.9056);transform-origin:left center;-webkit-text-stroke:0.22px #111;">vlan GUEST-WIRELESS 31</span>
<span class="t" style="left:519.20px;top:274.55px;font-size:9.4px;line-height:11.28px;color:#111;transform:scaleX(0.9700);transform-origin:left center;-webkit-text-stroke:0.22px #111;">local [/md/OWL/AMER/USA/Chicago]</span>
<div class="r" style="left:73.00px;top:286.30px;width:693.00px;height:13.43px;background:#c0e4f4;"></div>
<span class="t" style="left:75.20px;top:287.98px;font-size:9.4px;line-height:11.28px;color:#111;transform:scaleX(0.8994);transform-origin:left center;-webkit-text-stroke:0.22px #111;">vlan EMPLOYEE-WIRELESS 11</span>
<span class="t" style="left:519.20px;top:287.98px;font-size:9.4px;line-height:11.28px;color:#111;transform:scaleX(0.9700);transform-origin:left center;-webkit-text-stroke:0.22px #111;">local [/md/OWL/AMER/USA/Chicago]</span>
<span class="t" style="left:75.20px;top:301.41px;font-size:9.4px;line-height:11.28px;color:#111;transform:scaleX(0.9045);transform-origin:left center;-webkit-text-stroke:0.22px #111;">vlan OPS-WIRELESS 21</span>
<span class="t" style="left:519.20px;top:301.41px;font-size:9.4px;line-height:11.28px;color:#111;transform:scaleX(0.9700);transform-origin:left center;-webkit-text-stroke:0.22px #111;">local [/md/OWL/AMER/USA/Chicago]</span>
<div class="r" style="left:73.00px;top:313.16px;width:693.00px;height:13.43px;background:#c0e4f4;"></div>
<span class="t" style="left:75.20px;top:314.83px;font-size:9.4px;line-height:11.28px;color:#111;transform:scaleX(0.9825);transform-origin:left center;-webkit-text-stroke:0.22px #111;">ntp server 10.0.0.3</span>
<span class="t" style="left:519.20px;top:314.83px;font-size:9.4px;line-height:11.28px;color:#111;transform:scaleX(0.9668);transform-origin:left center;-webkit-text-stroke:0.22px #111;">inherited from [/md/OWL/AMER/USA]</span>
<span class="t" style="left:75.20px;top:328.27px;font-size:9.4px;line-height:11.28px;color:#111;transform:scaleX(0.9623);transform-origin:left center;-webkit-text-stroke:0.22px #111;">aaa authentication dot1x CorpNet_dot1_aut</span>
<span class="t" style="left:519.20px;top:328.27px;font-size:9.4px;line-height:11.28px;color:#111;-webkit-text-stroke:0.22px #111;">inherited from [/md/OWL]</span>
<div class="r" style="left:73.00px;top:340.02px;width:693.00px;height:13.43px;background:#c0e4f4;"></div>
<span class="t" style="left:75.20px;top:341.69px;font-size:9.4px;line-height:11.28px;color:#111;transform:scaleX(0.9595);transform-origin:left center;-webkit-text-stroke:0.22px #111;">aaa authentication dot1x GuestNet_dot1_aut</span>
<span class="t" style="left:519.20px;top:341.69px;font-size:9.4px;line-height:11.28px;color:#111;-webkit-text-stroke:0.22px #111;">inherited from [/md/OWL]</span>
<span class="t" style="left:75.20px;top:355.12px;font-size:9.4px;line-height:11.28px;color:#111;transform:scaleX(0.9596);transform-origin:left center;-webkit-text-stroke:0.22px #111;">aaa authentication dot1x OpsNet_dot1_aut</span>
<span class="t" style="left:519.20px;top:355.12px;font-size:9.4px;line-height:11.28px;color:#111;-webkit-text-stroke:0.22px #111;">inherited from [/md/OWL]</span>
<div class="r" style="left:73.00px;top:366.88px;width:693.00px;height:13.43px;background:#c0e4f4;"></div>
<span class="t" style="left:75.20px;top:368.56px;font-size:9.4px;line-height:11.28px;color:#111;transform:scaleX(0.9268);transform-origin:left center;-webkit-text-stroke:0.22px #111;">aaa authentication-server radius USEASTRADIUS1</span>
<span class="t" style="left:519.20px;top:368.56px;font-size:9.4px;line-height:11.28px;color:#111;transform:scaleX(0.9700);transform-origin:left center;-webkit-text-stroke:0.22px #111;">local [/md/OWL/AMER/USA/Chicago]</span>
<span class="t" style="left:83.80px;top:381.99px;font-size:9.4px;line-height:11.28px;color:#111;-webkit-text-stroke:0.22px #111;">host 10.0.0.46</span>
<span class="t" style="left:519.20px;top:381.99px;font-size:9.4px;line-height:11.28px;color:#111;transform:scaleX(0.9700);transform-origin:left center;-webkit-text-stroke:0.22px #111;">local [/md/OWL/AMER/USA/Chicago]</span>
<div class="r" style="left:73.00px;top:393.74px;width:693.00px;height:13.43px;background:#c0e4f4;"></div>
<span class="t" style="left:75.20px;top:395.42px;font-size:9.4px;line-height:11.28px;color:#111;transform:scaleX(0.9268);transform-origin:left center;-webkit-text-stroke:0.22px #111;">aaa authentication-server radius USEASTRADIUS2</span>
<span class="t" style="left:519.20px;top:395.42px;font-size:9.4px;line-height:11.28px;color:#111;transform:scaleX(0.9700);transform-origin:left center;-webkit-text-stroke:0.22px #111;">local [/md/OWL/AMER/USA/Chicago]</span>
<span class="t" style="left:83.80px;top:408.84px;font-size:9.4px;line-height:11.28px;color:#111;-webkit-text-stroke:0.22px #111;">host 10.0.0.47</span>
<span class="t" style="left:519.20px;top:408.84px;font-size:9.4px;line-height:11.28px;color:#111;transform:scaleX(0.9700);transform-origin:left center;-webkit-text-stroke:0.22px #111;">local [/md/OWL/AMER/USA/Chicago]</span>
<div class="r" style="left:73.00px;top:420.60px;width:693.00px;height:13.43px;background:#c0e4f4;"></div>
<span class="t" style="left:75.20px;top:422.28px;font-size:9.4px;line-height:11.28px;color:#111;transform:scaleX(0.9361);transform-origin:left center;-webkit-text-stroke:0.22px #111;">aaa authentication-server radius USRADIUS1</span>
<span class="t" style="left:519.20px;top:422.28px;font-size:9.4px;line-height:11.28px;color:#111;-webkit-text-stroke:0.22px #111;">inherited from [/md/OWL]</span>
<span class="t" style="left:83.80px;top:435.70px;font-size:9.4px;line-height:11.28px;color:#111;-webkit-text-stroke:0.22px #111;">host 172.16.23.46</span>
<span class="t" style="left:519.20px;top:435.70px;font-size:9.4px;line-height:11.28px;color:#111;-webkit-text-stroke:0.22px #111;">inherited from [/md/OWL]</span>
<div class="r" style="left:73.00px;top:447.46px;width:693.00px;height:13.43px;background:#c0e4f4;"></div>
<span class="t" style="left:83.80px;top:449.13px;font-size:9.4px;line-height:11.28px;color:#111;transform:scaleX(0.9331);transform-origin:left center;-webkit-text-stroke:0.22px #111;">key Berbee123</span>
<span class="t" style="left:519.20px;top:449.13px;font-size:9.4px;line-height:11.28px;color:#111;-webkit-text-stroke:0.22px #111;">inherited from [/md/OWL]</span>
<span class="t" style="left:75.20px;top:462.56px;font-size:9.4px;line-height:11.28px;color:#111;transform:scaleX(0.9361);transform-origin:left center;-webkit-text-stroke:0.22px #111;">aaa authentication-server radius USRADIUS2</span>
<span class="t" style="left:519.20px;top:462.56px;font-size:9.4px;line-height:11.28px;color:#111;-webkit-text-stroke:0.22px #111;">inherited from [/md/OWL]</span>
<div class="r" style="left:73.00px;top:474.32px;width:693.00px;height:13.43px;background:#c0e4f4;"></div>
<span class="t" style="left:83.80px;top:476.00px;font-size:9.4px;line-height:11.28px;color:#111;-webkit-text-stroke:0.22px #111;">host 172.16.23.47</span>
<span class="t" style="left:519.20px;top:476.00px;font-size:9.4px;line-height:11.28px;color:#111;-webkit-text-stroke:0.22px #111;">inherited from [/md/OWL]</span>
<span class="t" style="left:83.80px;top:489.43px;font-size:9.4px;line-height:11.28px;color:#111;transform:scaleX(0.9331);transform-origin:left center;-webkit-text-stroke:0.22px #111;">key Berbee123</span>
<span class="t" style="left:519.20px;top:489.43px;font-size:9.4px;line-height:11.28px;color:#111;-webkit-text-stroke:0.22px #111;">inherited from [/md/OWL]</span>
<div class="r" style="left:73.00px;top:501.18px;width:693.00px;height:13.43px;background:#c0e4f4;"></div>
<span class="t" style="left:75.20px;top:502.86px;font-size:9.4px;line-height:11.28px;color:#111;transform:scaleX(0.8981);transform-origin:left center;-webkit-text-stroke:0.22px #111;">aaa server-group USRADIUS_EAST</span>
<span class="t" style="left:519.20px;top:502.86px;font-size:9.4px;line-height:11.28px;color:#111;transform:scaleX(0.9700);transform-origin:left center;-webkit-text-stroke:0.22px #111;">local [/md/OWL/AMER/USA/Chicago]</span>
<span class="t" style="left:83.80px;top:516.29px;font-size:9.4px;line-height:11.28px;color:#111;transform:scaleX(0.9250);transform-origin:left center;-webkit-text-stroke:0.22px #111;">auth-server USEASTRADIUS1 position 1</span>
<span class="t" style="left:519.20px;top:516.29px;font-size:9.4px;line-height:11.28px;color:#111;transform:scaleX(0.9700);transform-origin:left center;-webkit-text-stroke:0.22px #111;">local [/md/OWL/AMER/USA/Chicago]</span>
<div class="r" style="left:73.00px;top:528.04px;width:693.00px;height:13.43px;background:#c0e4f4;"></div>
<span class="t" style="left:83.80px;top:529.72px;font-size:9.4px;line-height:11.28px;color:#111;transform:scaleX(0.9250);transform-origin:left center;-webkit-text-stroke:0.22px #111;">auth-server USEASTRADIUS2 position 2</span>
<span class="t" style="left:519.20px;top:529.72px;font-size:9.4px;line-height:11.28px;color:#111;transform:scaleX(0.9700);transform-origin:left center;-webkit-text-stroke:0.22px #111;">local [/md/OWL/AMER/USA/Chicago]</span>
<span class="t" style="left:75.20px;top:543.15px;font-size:9.4px;line-height:11.28px;color:#111;transform:scaleX(0.9471);transform-origin:left center;-webkit-text-stroke:0.22px #111;">aaa server-group CorpNet_dot1_svg</span>
<span class="t" style="left:519.20px;top:543.15px;font-size:9.4px;line-height:11.28px;color:#111;-webkit-text-stroke:0.22px #111;">inherited from [/md/OWL]</span>
<div class="r" style="left:73.00px;top:554.90px;width:693.00px;height:13.43px;background:#c0e4f4;"></div>
<span class="t" style="left:83.80px;top:556.58px;font-size:9.4px;line-height:11.28px;color:#111;transform:scaleX(0.9366);transform-origin:left center;-webkit-text-stroke:0.22px #111;">auth-server USRADIUS1 position 1</span>
<span class="t" style="left:519.20px;top:556.58px;font-size:9.4px;line-height:11.28px;color:#111;-webkit-text-stroke:0.22px #111;">inherited from [/md/OWL]</span>
<span class="t" style="left:83.80px;top:570.00px;font-size:9.4px;line-height:11.28px;color:#111;transform:scaleX(0.9366);transform-origin:left center;-webkit-text-stroke:0.22px #111;">auth-server USRADIUS2 position 2</span>
<span class="t" style="left:519.20px;top:570.00px;font-size:9.4px;line-height:11.28px;color:#111;-webkit-text-stroke:0.22px #111;">inherited from [/md/OWL]</span>
<div class="r" style="left:73.00px;top:151.50px;width:693.00px;height:1.00px;background:#6fc0e6;"></div>
<div class="r" style="left:73.00px;top:164.93px;width:693.00px;height:1.00px;background:#6fc0e6;"></div>
<div class="r" style="left:73.00px;top:178.36px;width:693.00px;height:1.00px;background:#6fc0e6;"></div>
<div class="r" style="left:73.00px;top:191.79px;width:693.00px;height:1.00px;background:#6fc0e6;"></div>
<div class="r" style="left:73.00px;top:205.22px;width:693.00px;height:1.00px;background:#6fc0e6;"></div>
<div class="r" style="left:73.00px;top:218.65px;width:693.00px;height:1.00px;background:#6fc0e6;"></div>
<div class="r" style="left:73.00px;top:232.08px;width:693.00px;height:1.00px;background:#6fc0e6;"></div>
<div class="r" style="left:73.00px;top:245.51px;width:693.00px;height:1.00px;background:#6fc0e6;"></div>
<div class="r" style="left:73.00px;top:258.94px;width:693.00px;height:1.00px;background:#6fc0e6;"></div>
<div class="r" style="left:73.00px;top:272.37px;width:693.00px;height:1.00px;background:#6fc0e6;"></div>
<div class="r" style="left:73.00px;top:285.80px;width:693.00px;height:1.00px;background:#6fc0e6;"></div>
<div class="r" style="left:73.00px;top:299.23px;width:693.00px;height:1.00px;background:#6fc0e6;"></div>
<div class="r" style="left:73.00px;top:312.66px;width:693.00px;height:1.00px;background:#6fc0e6;"></div>
<div class="r" style="left:73.00px;top:326.09px;width:693.00px;height:1.00px;background:#6fc0e6;"></div>
<div class="r" style="left:73.00px;top:339.52px;width:693.00px;height:1.00px;background:#6fc0e6;"></div>
<div class="r" style="left:73.00px;top:352.95px;width:693.00px;height:1.00px;background:#6fc0e6;"></div>
<div class="r" style="left:73.00px;top:366.38px;width:693.00px;height:1.00px;background:#6fc0e6;"></div>
<div class="r" style="left:73.00px;top:379.81px;width:693.00px;height:1.00px;background:#6fc0e6;"></div>
<div class="r" style="left:73.00px;top:393.24px;width:693.00px;height:1.00px;background:#6fc0e6;"></div>
<div class="r" style="left:73.00px;top:406.67px;width:693.00px;height:1.00px;background:#6fc0e6;"></div>
<div class="r" style="left:73.00px;top:420.10px;width:693.00px;height:1.00px;background:#6fc0e6;"></div>
<div class="r" style="left:73.00px;top:433.53px;width:693.00px;height:1.00px;background:#6fc0e6;"></div>
<div class="r" style="left:73.00px;top:446.96px;width:693.00px;height:1.00px;background:#6fc0e6;"></div>
<div class="r" style="left:73.00px;top:460.39px;width:693.00px;height:1.00px;background:#6fc0e6;"></div>
<div class="r" style="left:73.00px;top:473.82px;width:693.00px;height:1.00px;background:#6fc0e6;"></div>
<div class="r" style="left:73.00px;top:487.25px;width:693.00px;height:1.00px;background:#6fc0e6;"></div>
<div class="r" style="left:73.00px;top:500.68px;width:693.00px;height:1.00px;background:#6fc0e6;"></div>
<div class="r" style="left:73.00px;top:514.11px;width:693.00px;height:1.00px;background:#6fc0e6;"></div>
<div class="r" style="left:73.00px;top:527.54px;width:693.00px;height:1.00px;background:#6fc0e6;"></div>
<div class="r" style="left:73.00px;top:540.97px;width:693.00px;height:1.00px;background:#6fc0e6;"></div>
<div class="r" style="left:73.00px;top:554.40px;width:693.00px;height:1.00px;background:#6fc0e6;"></div>
<div class="r" style="left:73.00px;top:567.83px;width:693.00px;height:1.00px;background:#6fc0e6;"></div>
<div class="r" style="left:72.70px;top:139.00px;width:1.00px;height:440.00px;background:#6fc0e6;"></div>
<div class="r" style="left:765.00px;top:139.00px;width:1.00px;height:440.00px;background:#6fc0e6;"></div>
<div class="r" style="left:515.00px;top:152.00px;width:1.00px;height:427.00px;background:#b4dcf0;"></div>
<div class="r" style="left:0;top:130.2px;width:18.8px;height:8.2px;overflow:hidden;"><span class="t" style="left:6.6px;top:-3.5px;font-size:9.4px;line-height:11px;color:#444;">1</span></div>
<span class="t" style="left:6.59px;top:139.56px;font-size:9.4px;line-height:11.28px;color:#444;">2</span>
<span class="t" style="left:0.83px;top:152.94px;font-size:9.8px;line-height:11.76px;color:#4545f5;font-weight:bold;transform:scaleX(0.9664);transform-origin:center center;-webkit-text-stroke:0;">491</span>
<span class="t" style="left:0.83px;top:166.37px;font-size:9.8px;line-height:11.76px;color:#4545f5;font-weight:bold;transform:scaleX(0.9664);transform-origin:center center;-webkit-text-stroke:0;">493</span>
<span class="t" style="left:0.83px;top:179.80px;font-size:9.8px;line-height:11.76px;color:#4545f5;font-weight:bold;transform:scaleX(0.9664);transform-origin:center center;-webkit-text-stroke:0;">495</span>
<span class="t" style="left:0.83px;top:193.22px;font-size:9.8px;line-height:11.76px;color:#4545f5;font-weight:bold;transform:scaleX(0.9664);transform-origin:center center;-webkit-text-stroke:0;">497</span>
<span class="t" style="left:0.83px;top:206.66px;font-size:9.8px;line-height:11.76px;color:#4545f5;font-weight:bold;transform:scaleX(0.9664);transform-origin:center center;-webkit-text-stroke:0;">499</span>
<span class="t" style="left:0.83px;top:220.09px;font-size:9.8px;line-height:11.76px;color:#4545f5;font-weight:bold;transform:scaleX(0.9664);transform-origin:center center;-webkit-text-stroke:0;">501</span>
<span class="t" style="left:0.83px;top:233.51px;font-size:9.8px;line-height:11.76px;color:#4545f5;font-weight:bold;transform:scaleX(0.9664);transform-origin:center center;-webkit-text-stroke:0;">503</span>
<span class="t" style="left:0.83px;top:246.94px;font-size:9.8px;line-height:11.76px;color:#4545f5;font-weight:bold;transform:scaleX(0.9664);transform-origin:center center;-webkit-text-stroke:0;">504</span>
<span class="t" style="left:0.83px;top:260.38px;font-size:9.8px;line-height:11.76px;color:#4545f5;font-weight:bold;transform:scaleX(0.9664);transform-origin:center center;-webkit-text-stroke:0;">505</span>
<span class="t" style="left:0.83px;top:273.81px;font-size:9.8px;line-height:11.76px;color:#4545f5;font-weight:bold;transform:scaleX(0.9664);transform-origin:center center;-webkit-text-stroke:0;">506</span>
<span class="t" style="left:0.83px;top:287.24px;font-size:9.8px;line-height:11.76px;color:#4545f5;font-weight:bold;transform:scaleX(0.9664);transform-origin:center center;-webkit-text-stroke:0;">507</span>
<span class="t" style="left:0.83px;top:300.67px;font-size:9.8px;line-height:11.76px;color:#4545f5;font-weight:bold;transform:scaleX(0.9664);transform-origin:center center;-webkit-text-stroke:0;">508</span>
<span class="t" style="left:0.83px;top:314.09px;font-size:9.8px;line-height:11.76px;color:#4545f5;font-weight:bold;transform:scaleX(0.9664);transform-origin:center center;-webkit-text-stroke:0;">662</span>
<span class="t" style="left:0.83px;top:327.53px;font-size:9.8px;line-height:11.76px;color:#4545f5;font-weight:bold;transform:scaleX(0.9664);transform-origin:center center;-webkit-text-stroke:0;">821</span>
<span class="t" style="left:0.83px;top:340.95px;font-size:9.8px;line-height:11.76px;color:#4545f5;font-weight:bold;transform:scaleX(0.9664);transform-origin:center center;-webkit-text-stroke:0;">823</span>
<span class="t" style="left:0.83px;top:354.38px;font-size:9.8px;line-height:11.76px;color:#4545f5;font-weight:bold;transform:scaleX(0.9664);transform-origin:center center;-webkit-text-stroke:0;">825</span>
<span class="t" style="left:0.83px;top:367.81px;font-size:9.8px;line-height:11.76px;color:#4545f5;font-weight:bold;transform:scaleX(0.9664);transform-origin:center center;-webkit-text-stroke:0;">839</span>
<span class="t" style="left:0.83px;top:381.25px;font-size:9.8px;line-height:11.76px;color:#4545f5;font-weight:bold;transform:scaleX(0.9664);transform-origin:center center;-webkit-text-stroke:0;">840</span>
<span class="t" style="left:0.83px;top:394.68px;font-size:9.8px;line-height:11.76px;color:#4545f5;font-weight:bold;transform:scaleX(0.9664);transform-origin:center center;-webkit-text-stroke:0;">842</span>
<span class="t" style="left:0.83px;top:408.10px;font-size:9.8px;line-height:11.76px;color:#4545f5;font-weight:bold;transform:scaleX(0.9664);transform-origin:center center;-webkit-text-stroke:0;">843</span>
<span class="t" style="left:0.83px;top:421.54px;font-size:9.8px;line-height:11.76px;color:#4545f5;font-weight:bold;transform:scaleX(0.9664);transform-origin:center center;-webkit-text-stroke:0;">845</span>
<span class="t" style="left:0.83px;top:434.96px;font-size:9.8px;line-height:11.76px;color:#4545f5;font-weight:bold;transform:scaleX(0.9664);transform-origin:center center;-webkit-text-stroke:0;">846</span>
<span class="t" style="left:0.83px;top:448.39px;font-size:9.8px;line-height:11.76px;color:#4545f5;font-weight:bold;transform:scaleX(0.9664);transform-origin:center center;-webkit-text-stroke:0;">847</span>
<span class="t" style="left:0.83px;top:461.82px;font-size:9.8px;line-height:11.76px;color:#4545f5;font-weight:bold;transform:scaleX(0.9664);transform-origin:center center;-webkit-text-stroke:0;">849</span>
<span class="t" style="left:0.83px;top:475.25px;font-size:9.8px;line-height:11.76px;color:#4545f5;font-weight:bold;transform:scaleX(0.9664);transform-origin:center center;-webkit-text-stroke:0;">850</span>
<span class="t" style="left:0.83px;top:488.69px;font-size:9.8px;line-height:11.76px;color:#4545f5;font-weight:bold;transform:scaleX(0.9664);transform-origin:center center;-webkit-text-stroke:0;">851</span>
<span class="t" style="left:0.83px;top:502.12px;font-size:9.8px;line-height:11.76px;color:#4545f5;font-weight:bold;transform:scaleX(0.9664);transform-origin:center center;-webkit-text-stroke:0;">853</span>
<span class="t" style="left:0.83px;top:515.55px;font-size:9.8px;line-height:11.76px;color:#4545f5;font-weight:bold;transform:scaleX(0.9664);transform-origin:center center;-webkit-text-stroke:0;">854</span>
<span class="t" style="left:0.83px;top:528.98px;font-size:9.8px;line-height:11.76px;color:#4545f5;font-weight:bold;transform:scaleX(0.9664);transform-origin:center center;-webkit-text-stroke:0;">855</span>
<span class="t" style="left:0.83px;top:542.41px;font-size:9.8px;line-height:11.76px;color:#4545f5;font-weight:bold;transform:scaleX(0.9664);transform-origin:center center;-webkit-text-stroke:0;">857</span>
<span class="t" style="left:0.83px;top:555.84px;font-size:9.8px;line-height:11.76px;color:#4545f5;font-weight:bold;transform:scaleX(0.9664);transform-origin:center center;-webkit-text-stroke:0;">858</span>
<span class="t" style="left:0.83px;top:569.26px;font-size:9.8px;line-height:11.76px;color:#4545f5;font-weight:bold;transform:scaleX(0.9664);transform-origin:center center;-webkit-text-stroke:0;">859</span>
<svg class="r" style="left:0;top:0;" width="20" height="615" fill="#1d6b3e"><rect x="0" y="151.20" width="19" height="1.6"/><rect x="0" y="164.63" width="18.6" height="1.6"/><rect x="0" y="178.06" width="18.6" height="1.6"/><rect x="0" y="191.49" width="18.6" height="1.6"/><rect x="0" y="204.92" width="18.6" height="1.6"/><rect x="0" y="218.35" width="18.6" height="1.6"/><rect x="0" y="231.78" width="18.6" height="1.6"/><rect x="0" y="312.36" width="18.6" height="1.6"/><rect x="0" y="325.79" width="18.6" height="1.6"/><rect x="0" y="339.22" width="18.6" height="1.6"/><rect x="0" y="352.65" width="18.6" height="1.6"/><rect x="0" y="366.08" width="18.6" height="1.6"/><rect x="0" y="392.94" width="18.6" height="1.6"/><rect x="0" y="419.80" width="18.6" height="1.6"/><rect x="0" y="460.09" width="18.6" height="1.6"/><rect x="0" y="500.38" width="18.6" height="1.6"/><rect x="0" y="540.67" width="18.6" height="1.6"/></svg>
<div class="r" style="left:0.00px;top:151.40px;width:19.40px;height:14.83px;background:transparent;border:1.3px solid #1e7045;border-left:none;"></div>
<div class="r" style="left:72.20px;top:151.20px;width:444.00px;height:15.03px;background:transparent;border:1.5px solid #1e7045;"></div>
<div class="r" style="left:513.60px;top:164.20px;width:3.60px;height:3.60px;background:#1e7045;border:0.6px solid #fff;"></div>
<div class="r" style="left:21.20px;top:570.20px;width:924.80px;height:6.40px;background:rgba(120,120,120,0.66);border-radius:3.2px;"></div>
<div class="r" style="left:0.00px;top:579.00px;width:1024.00px;height:17.40px;background:#f0f0f0;border-top:1px solid #dadada;"></div>
<svg class="r" style="left:10.00px;top:583.40px;" width="6" height="8" viewBox="0 0 6 8"><path d="M5 0.8 L1 4 L5 7.2 Z" fill="#c2c2c2"/></svg>
<svg class="r" style="left:25.00px;top:583.40px;" width="6" height="8" viewBox="0 0 6 8"><path d="M1 0.8 L5 4 L1 7.2 Z" fill="#c2c2c2"/></svg>
<div class="r" style="left:41.00px;top:580.40px;width:1.00px;height:14.00px;background:#dcdcdc;"></div>
<span class="t" style="left:53.00px;top:582.44px;font-size:8.6px;line-height:10.32px;color:#5a5a5a;transform:scaleX(0.9795);transform-origin:left center;">Applied Configs</span>
<div class="r" style="left:124.60px;top:579.40px;width:55.00px;height:15.40px;background:#fff;border-radius:0 0 3px 3px;box-shadow:0 0.5px 1.5px rgba(0,0,0,.32);"></div>
<span class="t" style="left:136.00px;top:582.44px;font-size:8.6px;line-height:10.32px;color:#2c8a55;font-weight:bold;transform:scaleX(0.9206);transform-origin:left center;">Effective</span>
<span class="t" style="left:192.00px;top:582.44px;font-size:8.6px;line-height:10.32px;color:#555;transform:scaleX(0.9862);transform-origin:left center;">Committed</span>
<div class="r" style="left:245.00px;top:580.40px;width:0.80px;height:14.00px;background:#d4d4d4;"></div>
<svg class="r" style="left:253.60px;top:583.00px;" width="9" height="9" viewBox="0 0 9 9"><path d="M4.5 0.8 V8.2 M0.8 4.5 H8.2" stroke="#4a4a4a" stroke-width="1.2"/></svg>
<div class="r" style="left:270.00px;top:580.40px;width:0.80px;height:14.00px;background:#d4d4d4;"></div>
<div class="r" style="left:0.00px;top:596.00px;width:1024.00px;height:19.00px;background:#f5f5f5;border-top:1px solid #dcdcdc;"></div>
<span class="t" style="left:16.00px;top:600.24px;font-size:8.6px;line-height:10.32px;color:#6a6a6a;transform:scaleX(0.9454);transform-origin:left center;">Ready</span>
<span class="t" style="left:54.00px;top:600.24px;font-size:8.6px;line-height:10.32px;color:#6a6a6a;">303 of 2126 records found</span>
<svg class="r" style="left:169.50px;top:600.00px;" width="10" height="11" viewBox="0 0 10 11"><circle cx="3.6" cy="1.8" r="1.2" fill="none" stroke="#555" stroke-width="0.8"/><path d="M0.8 3.8 H6.4 M3.6 3.8 V6.6 M3.6 6.6 L1.8 10 M3.6 6.6 L4.6 8" fill="none" stroke="#555" stroke-width="0.8" stroke-linecap="round"/><circle cx="7" cy="8" r="2.3" fill="#f2f2f2" stroke="#555" stroke-width="0.8"/><path d="M6 8 L6.8 8.8 L8.2 7.2" fill="none" stroke="#555" stroke-width="0.7"/></svg>
<span class="t" style="left:182.00px;top:600.24px;font-size:8.6px;line-height:10.32px;color:#6a6a6a;">Accessibility: Good to go</span>
<div class="r" style="left:812.00px;top:598.20px;width:20.00px;height:14.40px;background:#c6c6c6;border-radius:2px;"></div>
<svg class="r" style="left:817.60px;top:601.00px;" width="9" height="9" viewBox="0 0 9 9"><rect x="0.4" y="0.4" width="8.2" height="8.2" rx="0.8" fill="#333"/><path d="M3.1 0.4 V8.6 M5.9 0.4 V8.6 M0.4 3.1 H8.6 M0.4 5.9 H8.6" stroke="#c6c6c6" stroke-width="0.7"/></svg>
<svg class="r" style="left:843.00px;top:600.40px;" width="8" height="10" viewBox="0 0 8 10"><path d="M0.8 0.8 H4.8 L7.2 3.2 V9.2 H0.8 Z" fill="none" stroke="#555" stroke-width="0.8"/><path d="M2.4 4.6 H5.6 V7.6 H2.4 Z M2.4 6 H5.6" fill="none" stroke="#555" stroke-width="0.6"/></svg>
<svg class="r" style="left:866.50px;top:600.00px;" width="10" height="11" viewBox="0 0 10 11"><path d="M1 0.6 V2.6 Q1 3.4 1.8 3.4 H8.2 Q9 3.4 9 2.6 V0.6 M1 10.4 V8.4 Q1 7.6 1.8 7.6 H8.2 Q9 7.6 9 8.4 V10.4 M0 5.5 H10" fill="none" stroke="#555" stroke-width="0.8"/></svg>
<div class="r" style="left:888.00px;top:604.80px;width:5.00px;height:0.90px;background:#666;"></div>
<div class="r" style="left:897.60px;top:604.40px;width:67.00px;height:1.60px;background:#a8a8a8;border-radius:1px;"></div>
<div class="r" style="left:927.40px;top:600.00px;width:10.60px;height:10.60px;background:#fff;border-radius:50%;box-shadow:0 0.3px 1.2px rgba(0,0,0,.45);"></div>
<svg class="r" style="left:968.40px;top:602.00px;" width="7" height="7" viewBox="0 0 7 7"><path d="M3.5 0.6 V6.4 M0.6 3.5 H6.4" stroke="#666" stroke-width="0.9"/></svg>
<span class="t" style="left:986.70px;top:600.00px;font-size:9px;line-height:10.8px;color:#707070;transform:scaleX(0.9037);transform-origin:left center;">125%</span>
<div class="r" style="left:765.30px;top:151.00px;width:250.10px;height:309.40px;background:#f0f0f1;border-radius:6px;box-shadow:0 0 0 0.6px rgba(0,0,0,.12),0 3px 11px rgba(0,0,0,.17);"></div>
<div class="r" style="left:765.30px;top:164.20px;width:250.10px;height:0.80px;background:#dadada;"></div>
<div class="r" style="left:769.20px;top:154.60px;width:6.20px;height:6.20px;background:#f0544f;border-radius:50%;"></div>
<span class="t" style="left:875.63px;top:153.76px;font-size:7.4px;line-height:8.88px;color:#555;transform:scaleX(0.9621);transform-origin:center center;">WHERE</span>
<span class="t" style="left:773.00px;top:167.88px;font-size:8.2px;line-height:9.84px;color:#222;font-weight:bold;transform:scaleX(0.9451);transform-origin:left center;">Sort</span>
<div class="r" style="left:779.00px;top:182.40px;width:109.60px;height:15.40px;background:#f6f6f6;border-radius:1px;border:0.7px solid #cbcbcb;box-shadow:inset 0 0 0 0.6px #fff;"></div>
<div class="r" style="left:891.00px;top:182.40px;width:110.00px;height:15.40px;background:#f6f6f6;border-radius:1px;border:0.7px solid #cbcbcb;box-shadow:inset 0 0 0 0.6px #fff;"></div>
<span class="t" style="left:783.4px;top:185px;font-size:5.6px;line-height:5.6px;color:#2f7fd1;font-weight:bold;">A</span>
<span class="t" style="left:783.4px;top:189.9px;font-size:5.6px;line-height:5.6px;color:#333;font-weight:bold;">Z</span>
<svg class="r" style="left:787.80px;top:187.60px;" width="5" height="7" viewBox="0 0 5 7"><path d="M2.5 0.6 V5.2 M0.7 3.4 L2.5 5.6 L4.3 3.4" fill="none" stroke="#333" stroke-width="1.1" stroke-linecap="round" stroke-linejoin="round"/></svg>
<span class="t" style="left:796.00px;top:184.64px;font-size:9.6px;line-height:11.52px;color:#222;transform:scaleX(0.9480);transform-origin:left center;">Ascending</span>
<span class="t" style="left:895.4px;top:185px;font-size:5.6px;line-height:5.6px;color:#333;font-weight:bold;">Z</span>
<span class="t" style="left:895.4px;top:189.9px;font-size:5.6px;line-height:5.6px;color:#2f7fd1;font-weight:bold;">A</span>
<svg class="r" style="left:899.80px;top:187.60px;" width="5" height="7" viewBox="0 0 5 7"><path d="M2.5 0.6 V5.2 M0.7 3.4 L2.5 5.6 L4.3 3.4" fill="none" stroke="#333" stroke-width="1.1" stroke-linecap="round" stroke-linejoin="round"/></svg>
<span class="t" style="left:908.00px;top:184.64px;font-size:9.6px;line-height:11.52px;color:#222;transform:scaleX(0.9468);transform-origin:left center;">Descending</span>
<span class="t" style="left:779.00px;top:204.32px;font-size:7.8px;line-height:9.36px;color:#222;transform:scaleX(1.0382);transform-origin:left center;">By color:</span>
<div class="r" style="left:816.80px;top:204.00px;width:184.20px;height:10.20px;background:#fff;border-radius:3px;box-shadow:0 0 0 0.5px rgba(0,0,0,.08),0 0.6px 1.4px rgba(0,0,0,.16);"></div>
<span class="t" style="left:821.20px;top:204.62px;font-size:7.8px;line-height:9.36px;color:#222;transform:scaleX(0.9654);transform-origin:left center;">None</span>
<div class="r" style="left:992.40px;top:205.60px;width:7.20px;height:7.00px;background:#1f7a45;border-radius:2px;"></div>
<svg class="r" style="left:993.60px;top:206.10px;" width="5" height="6" viewBox="0 0 5 6"><path d="M1.1 2.1 L2.5 0.7 L3.9 2.1 M1.1 3.9 L2.5 5.3 L3.9 3.9" fill="none" stroke="#fff" stroke-width="0.75" stroke-linecap="round" stroke-linejoin="round"/></svg>
<div class="r" style="left:779.00px;top:219.60px;width:222.00px;height:0.70px;background:#d8d8d8;"></div>
<span class="t" style="left:773.00px;top:223.48px;font-size:8.2px;line-height:9.84px;color:#222;font-weight:bold;transform:scaleX(0.9727);transform-origin:left center;">Filter</span>
<span class="t" style="left:779.00px;top:238.52px;font-size:7.8px;line-height:9.36px;color:#222;transform:scaleX(1.0382);transform-origin:left center;">By color:</span>
<div class="r" style="left:816.80px;top:238.20px;width:184.20px;height:10.20px;background:#fff;border-radius:3px;box-shadow:0 0 0 0.5px rgba(0,0,0,.08),0 0.6px 1.4px rgba(0,0,0,.16);"></div>
<span class="t" style="left:821.20px;top:238.82px;font-size:7.8px;line-height:9.36px;color:#222;transform:scaleX(0.9654);transform-origin:left center;">None</span>
<div class="r" style="left:992.40px;top:239.80px;width:7.20px;height:7.00px;background:#1f7a45;border-radius:2px;"></div>
<svg class="r" style="left:993.60px;top:240.30px;" width="5" height="6" viewBox="0 0 5 6"><path d="M1.1 2.1 L2.5 0.7 L3.9 2.1 M1.1 3.9 L2.5 5.3 L3.9 3.9" fill="none" stroke="#fff" stroke-width="0.75" stroke-linecap="round" stroke-linejoin="round"/></svg>
<div class="r" style="left:779.00px;top:256.00px;width:89.00px;height:10.60px;background:#fff;border-radius:3px;box-shadow:0 0 0 0.5px rgba(0,0,0,.08),0 0.6px 1.4px rgba(0,0,0,.16);"></div>
<span class="t" style="left:783.40px;top:256.82px;font-size:7.8px;line-height:9.36px;color:#222;transform:scaleX(0.9705);transform-origin:left center;">Choose One</span>
<div class="r" style="left:859.40px;top:257.60px;width:7.20px;height:7.40px;background:#1f7a45;border-radius:2px;"></div>
<svg class="r" style="left:860.60px;top:258.30px;" width="5" height="6" viewBox="0 0 5 6"><path d="M1.1 2.1 L2.5 0.7 L3.9 2.1 M1.1 3.9 L2.5 5.3 L3.9 3.9" fill="none" stroke="#fff" stroke-width="0.75" stroke-linecap="round" stroke-linejoin="round"/></svg>
<div class="r" style="left:874.80px;top:254.80px;width:122.00px;height:12.20px;background:#fff;border-radius:1px;box-shadow:0 0 0 0.5px rgba(0,0,0,.10),0 0.6px 1.2px rgba(0,0,0,.12);"></div>
<div class="r" style="left:987.40px;top:255.40px;width:0.60px;height:11.00px;background:#e4e4e4;"></div>
<svg class="r" style="left:990.40px;top:259.40px;" width="5" height="4" viewBox="0 0 5 4"><path d="M0.6 0.6 H4.4 L2.5 3.2 Z" fill="#666"/></svg>
<div class="r" style="left:779.80px;top:275.40px;width:220.80px;height:10.60px;background:#fff;border-radius:3px;box-shadow:0 0 0 0.5px rgba(0,0,0,.08),0 0.5px 1px rgba(0,0,0,.12);"></div>
<svg class="r" style="left:784.20px;top:277.60px;" width="7" height="7" viewBox="0 0 7 7"><circle cx="2.9" cy="2.9" r="2.4" fill="none" stroke="#666" stroke-width="0.9"/><path d="M4.7 4.7 L6.8 6.8" stroke="#666" stroke-width="0.9" stroke-linecap="round"/></svg>
<span class="t" style="left:796.60px;top:277.28px;font-size:7.2px;line-height:8.64px;color:#c4c4c4;transform:scaleX(1.0740);transform-origin:left center;">Search</span>
<div class="r" style="left:777.20px;top:290.40px;width:226.00px;height:138.40px;background:#fff;border:2px solid #74aa88;border-radius:1.5px;box-shadow:0 0 0 0.8px rgba(116,170,136,.45);"></div>
<div class="r" style="left:796.80px;top:300.80px;width:9.40px;height:9.40px;background:#1b7a43;border-radius:2.2px;"></div>
<svg class="r" style="left:796.80px;top:300.80px;" width="9.4" height="9.4" viewBox="0 0 9.4 9.4"><path d="M2.4 4.7 H7" stroke="#fff" stroke-width="1.6" stroke-linecap="round"/></svg>
<span class="t" style="left:811.00px;top:300.76px;font-size:8.4px;line-height:10.08px;color:#222;transform:scaleX(1.1085);transform-origin:left center;">(Select All)</span>
<div class="r" style="left:796.80px;top:314.20px;width:9.40px;height:9.40px;background:#fff;border-radius:2.2px;border:0.7px solid #cfcfcf;"></div>
<span class="t" style="left:811.00px;top:314.16px;font-size:8.4px;line-height:10.08px;color:#222;transform:scaleX(1.1205);transform-origin:left center;">inherited from [/]</span>
<div class="r" style="left:796.80px;top:327.60px;width:9.40px;height:9.40px;background:#fff;border-radius:2.2px;border:0.7px solid #cfcfcf;"></div>
<span class="t" style="left:811.00px;top:327.56px;font-size:8.4px;line-height:10.08px;color:#222;transform:scaleX(1.1126);transform-origin:left center;">inherited from [/md]</span>
<div class="r" style="left:796.80px;top:341.00px;width:9.40px;height:9.40px;background:#1b7a43;border-radius:2.2px;"></div>
<svg class="r" style="left:796.80px;top:341.00px;" width="9.4" height="9.4" viewBox="0 0 9.4 9.4"><path d="M2.4 4.8 L4.1 6.6 L7.2 2.6" fill="none" stroke="#fff" stroke-width="1.3" stroke-linecap="round" stroke-linejoin="round"/></svg>
<span class="t" style="left:811.00px;top:340.96px;font-size:8.4px;line-height:10.08px;color:#222;transform:scaleX(1.0978);transform-origin:left center;">inherited from [/md/OWL]</span>
<div class="r" style="left:796.80px;top:354.40px;width:9.40px;height:9.40px;background:#1b7a43;border-radius:2.2px;"></div>
<svg class="r" style="left:796.80px;top:354.40px;" width="9.4" height="9.4" viewBox="0 0 9.4 9.4"><path d="M2.4 4.8 L4.1 6.6 L7.2 2.6" fill="none" stroke="#fff" stroke-width="1.3" stroke-linecap="round" stroke-linejoin="round"/></svg>
<span class="t" style="left:811.00px;top:354.36px;font-size:8.4px;line-height:10.08px;color:#222;transform:scaleX(1.0712);transform-origin:left center;">inherited from [/md/OWL/AMER/USA]</span>
<div class="r" style="left:785.20px;top:366.20px;width:209.40px;height:13.00px;background:#0e6a30;border-radius:3px;"></div>
<div class="r" style="left:796.80px;top:367.80px;width:9.40px;height:9.40px;background:#2a8450;border-radius:2.2px;"></div>
<svg class="r" style="left:796.80px;top:367.80px;" width="9.4" height="9.4" viewBox="0 0 9.4 9.4"><path d="M2.4 4.8 L4.1 6.6 L7.2 2.6" fill="none" stroke="#fff" stroke-width="1.3" stroke-linecap="round" stroke-linejoin="round"/></svg>
<span class="t" style="left:811.00px;top:367.76px;font-size:8.4px;line-height:10.08px;color:#fff;transform:scaleX(1.0675);transform-origin:left center;">local [/md/OWL/AMER/USA/Chicago]</span>
<div class="r" style="left:796.80px;top:381.20px;width:9.40px;height:9.40px;background:#fff;border-radius:2.2px;border:0.7px solid #cfcfcf;"></div>
<span class="t" style="left:811.00px;top:381.16px;font-size:8.4px;line-height:10.08px;color:#222;transform:scaleX(1.0550);transform-origin:left center;">(Blanks)</span>
<div class="r" style="left:779.00px;top:431.00px;width:8.40px;height:8.40px;background:#1b7a43;border-radius:2px;"></div>
<svg class="r" style="left:779.40px;top:431.40px;" width="7.6" height="7.6" viewBox="0 0 7.6 7.6"><path d="M1.9 3.9 L3.3 5.4 L5.8 2.1" fill="none" stroke="#fff" stroke-width="1.1" stroke-linecap="round" stroke-linejoin="round"/></svg>
<span class="t" style="left:790.20px;top:430.84px;font-size:7.6px;line-height:9.12px;color:#222;transform:scaleX(1.0320);transform-origin:left center;">Auto Apply</span>
<div class="r" style="left:895.80px;top:443.40px;width:52.40px;height:10.40px;background:#f5f5f6;border-radius:3px;box-shadow:0 0 0 0.5px rgba(0,0,0,.07),0 0.5px 1px rgba(0,0,0,.07);"></div>
<span class="t" style="left:903.00px;top:444.24px;font-size:7.6px;line-height:9.12px;color:#c2c2c2;transform:scaleX(1.0392);transform-origin:center center;">Apply Filter</span>
<div class="r" style="left:951.00px;top:443.40px;width:50.20px;height:10.40px;background:#fff;border-radius:3px;box-shadow:0 0 0 0.5px rgba(0,0,0,.14),0 0.6px 1.4px rgba(0,0,0,.22);"></div>
<span class="t" style="left:957.62px;top:444.24px;font-size:7.6px;line-height:9.12px;color:#222;transform:scaleX(1.0361);transform-origin:center center;">Clear Filter</span>
<svg class="r" style="left:0;top:0;" width="1024" height="615"><path d="M726.41 131.59 L750.40 143.80 L726.41 156.01 A13.7 13.7 0 1 1 726.41 131.59 Z" fill="#fa8a0e"/></svg>
<span class="t" style="left:716.93px;top:133.60px;font-size:17.5px;line-height:21.0px;color:#fff;">1</span>
<svg class="r" style="left:0;top:0;" width="1024" height="615"><path d="M750.10 347.24 L776.00 359.60 L750.10 371.96 A13.7 13.7 0 1 1 750.10 347.24 Z" fill="#fa8a0e"/></svg>
<span class="t" style="left:741.93px;top:349.40px;font-size:17.5px;line-height:21.0px;color:#fff;">2</span>
<svg class="r" style="left:0;top:0;" width="1024" height="615"><path d="M0 608.5 A6.5 6.5 0 0 0 6.5 615 L0 615 Z" fill="#a4a4a4"/><path d="M1024 608.5 A6.5 6.5 0 0 1 1017.5 615 L1024 615 Z" fill="#8f9aa3"/><path d="M0 5.5 A5.5 5.5 0 0 1 5.5 0 L0 0 Z" fill="#fcfcfc"/><path d="M1024 5.5 A5.5 5.5 0 0 0 1018.5 0 L1024 0 Z" fill="#fcfcfc"/></svg>
</div></body></html>
